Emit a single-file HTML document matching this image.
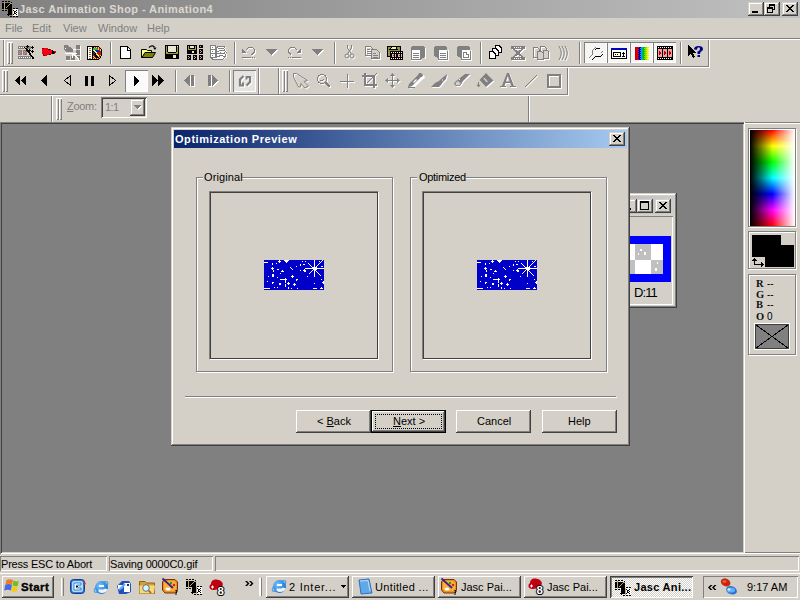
<!DOCTYPE html>
<html><head><meta charset="utf-8">
<style>
*{box-sizing:border-box}
html,body{margin:0;padding:0;width:800px;height:600px;overflow:hidden;background:#d4d0c8;font-family:"Liberation Sans",sans-serif;font-size:11px;color:#000}
.a{position:absolute}
.t{position:absolute;white-space:pre;line-height:13px}
.hl{position:absolute;height:1px}
.vl{position:absolute;width:1px}
.btn{position:absolute;background:#d4d0c8;box-shadow:inset -1px -1px #404040,inset 1px 1px #fff,inset -2px -2px #808080}
.cbtn{position:absolute;width:16px;height:14px;background:#d4d0c8;box-shadow:inset -1px -1px #404040,inset 1px 1px #d4d0c8,inset -2px -2px #808080,inset 2px 2px #fff}
.pressed{position:absolute;box-shadow:inset 1px 1px #808080,inset -1px -1px #fff;background-color:#e9e7e3}
.grip{position:absolute;width:6px}
.grip:before,.grip:after{content:"";position:absolute;top:0;bottom:0;width:3px;box-shadow:inset 1px 1px #fff,inset -1px -1px #808080}
.grip:before{left:0}.grip:after{left:3px}
.sep{position:absolute;width:2px;box-shadow:inset 1px 0 #808080,inset -1px 0 #fff}
svg{position:absolute;overflow:visible}
</style></head><body>


<!-- Title bar -->
<div class="a" style="left:0;top:0;width:800px;height:18px;background:linear-gradient(to right,#808080,#c0c0c0)"></div>
<div class="t" style="left:19px;top:3px;color:#dcd8d0;font-weight:bold;letter-spacing:0.42px">Jasc Animation Shop - Animation4</div>
<div class="cbtn" style="left:748px;top:2px"></div>
<div class="cbtn" style="left:764px;top:2px"></div>
<div class="cbtn" style="left:782px;top:2px"></div>
<svg style="left:752px;top:11px" width="6" height="2" shape-rendering="crispEdges"><rect width="6" height="2" fill="#000"/></svg>
<svg style="left:767px;top:4px" width="8" height="9" shape-rendering="crispEdges" fill="#000"><rect x="2" y="0" width="6" height="2"/><rect x="7" y="2" width="1" height="4"/><rect x="6" y="5" width="1" height="1"/><rect x="2" y="2" width="1" height="1"/><rect x="0" y="3" width="6" height="2"/><rect x="0" y="5" width="1" height="4"/><rect x="5" y="5" width="1" height="4"/><rect x="0" y="8" width="6" height="1"/></svg>
<svg style="left:786px;top:5px" width="8" height="7" shape-rendering="crispEdges" fill="#000"><rect x="0" y="0" width="2" height="1"/><rect x="6" y="0" width="2" height="1"/><rect x="1" y="1" width="2" height="1"/><rect x="5" y="1" width="2" height="1"/><rect x="2" y="2" width="4" height="1"/><rect x="3" y="3" width="2" height="1"/><rect x="2" y="4" width="4" height="1"/><rect x="1" y="5" width="2" height="1"/><rect x="5" y="5" width="2" height="1"/><rect x="0" y="6" width="2" height="1"/><rect x="6" y="6" width="2" height="1"/></svg>

<!-- JASCICON -->
<svg style="left:2px;top:1px" width="16" height="16" shape-rendering="crispEdges"><rect x="0" y="0" width="2" height="1" fill="#000"/><rect x="3" y="0" width="2" height="1" fill="#000"/><rect x="6" y="0" width="2" height="1" fill="#000"/><rect x="2" y="1" width="1" height="1" fill="#c0a868"/><rect x="9" y="1" width="1" height="1" fill="#000"/><rect x="0" y="2" width="2" height="1" fill="#000"/><rect x="2" y="2" width="1" height="1" fill="#c0a868"/><rect x="3" y="2" width="5" height="1" fill="#000"/><rect x="8" y="2" width="2" height="1" fill="#c0a868"/><rect x="0" y="3" width="2" height="1" fill="#000"/><rect x="2" y="3" width="1" height="1" fill="#c0a868"/><rect x="3" y="3" width="4" height="1" fill="#000"/><rect x="7" y="3" width="1" height="1" fill="#c0a868"/><rect x="8" y="3" width="2" height="1" fill="#000"/><rect x="0" y="4" width="2" height="1" fill="#000"/><rect x="2" y="4" width="1" height="1" fill="#c0a868"/><rect x="3" y="4" width="3" height="1" fill="#000"/><rect x="6" y="4" width="1" height="1" fill="#c0a868"/><rect x="7" y="4" width="3" height="1" fill="#000"/><rect x="0" y="5" width="2" height="1" fill="#000"/><rect x="2" y="5" width="1" height="1" fill="#c0a868"/><rect x="3" y="5" width="2" height="1" fill="#000"/><rect x="5" y="5" width="1" height="1" fill="#c0a868"/><rect x="6" y="5" width="4" height="1" fill="#000"/><rect x="0" y="6" width="2" height="1" fill="#000"/><rect x="2" y="6" width="1" height="1" fill="#c0a868"/><rect x="3" y="6" width="1" height="1" fill="#000"/><rect x="4" y="6" width="1" height="1" fill="#c0a868"/><rect x="5" y="6" width="5" height="1" fill="#000"/><rect x="0" y="7" width="2" height="1" fill="#000"/><rect x="2" y="7" width="1" height="1" fill="#c0a868"/><rect x="3" y="7" width="7" height="1" fill="#000"/><rect x="11" y="7" width="2" height="1" fill="#000"/><rect x="14" y="7" width="2" height="1" fill="#000"/><rect x="2" y="8" width="1" height="1" fill="#c0a868"/><rect x="6" y="8" width="4" height="1" fill="#000"/><rect x="10" y="8" width="1" height="1" fill="#c0a868"/><rect x="11" y="8" width="5" height="1" fill="#fff"/><rect x="0" y="9" width="2" height="1" fill="#000"/><rect x="3" y="9" width="2" height="1" fill="#000"/><rect x="6" y="9" width="4" height="1" fill="#000"/><rect x="10" y="9" width="1" height="1" fill="#c0a868"/><rect x="11" y="9" width="1" height="1" fill="#000"/><rect x="12" y="9" width="2" height="1" fill="#fff"/><rect x="14" y="9" width="1" height="1" fill="#000"/><rect x="15" y="9" width="1" height="1" fill="#fff"/><rect x="6" y="10" width="4" height="1" fill="#000"/><rect x="10" y="10" width="1" height="1" fill="#c0a868"/><rect x="11" y="10" width="1" height="1" fill="#fff"/><rect x="12" y="10" width="2" height="1" fill="#000"/><rect x="14" y="10" width="2" height="1" fill="#fff"/><rect x="6" y="11" width="4" height="1" fill="#000"/><rect x="10" y="11" width="1" height="1" fill="#c0a868"/><rect x="11" y="11" width="1" height="1" fill="#fff"/><rect x="12" y="11" width="1" height="1" fill="#000"/><rect x="13" y="11" width="1" height="1" fill="#fff"/><rect x="14" y="11" width="1" height="1" fill="#000"/><rect x="15" y="11" width="1" height="1" fill="#fff"/><rect x="6" y="12" width="4" height="1" fill="#000"/><rect x="10" y="12" width="1" height="1" fill="#c0a868"/><rect x="11" y="12" width="1" height="1" fill="#fff"/><rect x="12" y="12" width="2" height="1" fill="#000"/><rect x="14" y="12" width="2" height="1" fill="#fff"/><rect x="5" y="13" width="5" height="1" fill="#000"/><rect x="10" y="13" width="1" height="1" fill="#c0a868"/><rect x="11" y="13" width="1" height="1" fill="#000"/><rect x="12" y="13" width="2" height="1" fill="#fff"/><rect x="14" y="13" width="1" height="1" fill="#000"/><rect x="15" y="13" width="1" height="1" fill="#fff"/><rect x="6" y="14" width="1" height="1" fill="#000"/><rect x="10" y="14" width="1" height="1" fill="#c0a868"/><rect x="11" y="14" width="5" height="1" fill="#fff"/><rect x="8" y="15" width="2" height="1" fill="#000"/><rect x="11" y="15" width="2" height="1" fill="#000"/><rect x="14" y="15" width="2" height="1" fill="#000"/></svg>
<!-- Menu -->
<div class="t" style="left:5px;top:22px;color:#808080">File</div>
<div class="t" style="left:32px;top:22px;color:#808080">Edit</div>
<div class="t" style="left:63px;top:22px;color:#808080">View</div>
<div class="t" style="left:98px;top:22px;color:#808080">Window</div>
<div class="t" style="left:147px;top:22px;color:#808080">Help</div>

<!-- rebar lines -->
<div class="hl" style="left:0;top:38px;width:800px;background:#808080"></div>
<div class="hl" style="left:0;top:39px;width:800px;background:#fff"></div>

<!-- Toolbars -->
<div class="vl" style="left:3px;top:40px;height:26px;background:#808080"></div>
<div class="vl" style="left:4px;top:40px;height:26px;background:#fff"></div>
<div class="vl" style="left:708px;top:40px;height:26px;background:#808080"></div>
<div class="vl" style="left:709px;top:40px;height:27px;background:#fff"></div>
<div class="hl" style="left:0px;top:66px;width:709px;background:#808080"></div>
<div class="hl" style="left:0px;top:67px;width:710px;background:#fff"></div>
<div class="hl" style="left:0px;top:94px;width:568px;background:#808080"></div>
<div class="hl" style="left:0px;top:95px;width:569px;background:#fff"></div>
<div class="vl" style="left:258px;top:68px;height:26px;background:#808080"></div>
<div class="vl" style="left:259px;top:68px;height:26px;background:#fff"></div>
<div class="vl" style="left:278px;top:68px;height:26px;background:#808080"></div>
<div class="vl" style="left:279px;top:68px;height:26px;background:#fff"></div>
<div class="vl" style="left:567px;top:68px;height:26px;background:#808080"></div>
<div class="vl" style="left:568px;top:68px;height:27px;background:#fff"></div>
<div class="vl" style="left:51px;top:96px;height:26px;background:#808080"></div>
<div class="vl" style="left:52px;top:96px;height:26px;background:#fff"></div>
<div class="vl" style="left:528px;top:96px;height:26px;background:#808080"></div>
<div class="vl" style="left:529px;top:96px;height:26px;background:#fff"></div>
<div class="grip" style="left:7px;top:42px;height:22px"></div>
<div class="grip" style="left:2px;top:70px;height:22px"></div>
<div class="grip" style="left:282px;top:70px;height:22px"></div>
<div class="grip" style="left:56px;top:98px;height:22px"></div>
<svg style="left:18px;top:45px" width="16" height="14" shape-rendering="crispEdges"><rect x="9" y="0" width="1" height="1" fill="#000"/><rect x="0" y="1" width="8" height="1" fill="#808080"/><rect x="8" y="1" width="3" height="1" fill="#000"/><rect x="11" y="1" width="2" height="1" fill="#808080"/><rect x="14" y="1" width="1" height="1" fill="#000"/><rect x="0" y="2" width="1" height="1" fill="#808080"/><rect x="1" y="2" width="1" height="1" fill="#fff"/><rect x="2" y="2" width="1" height="1" fill="#808080"/><rect x="3" y="2" width="1" height="1" fill="#fff"/><rect x="4" y="2" width="1" height="1" fill="#808080"/><rect x="5" y="2" width="1" height="1" fill="#fff"/><rect x="6" y="2" width="1" height="1" fill="#000"/><rect x="7" y="2" width="1" height="1" fill="#e0d040"/><rect x="8" y="2" width="1" height="1" fill="#808080"/><rect x="9" y="2" width="1" height="1" fill="#000"/><rect x="10" y="2" width="3" height="1" fill="#808080"/><rect x="13" y="2" width="3" height="1" fill="#000"/><rect x="0" y="3" width="6" height="1" fill="#808080"/><rect x="6" y="3" width="1" height="1" fill="#e0d040"/><rect x="7" y="3" width="2" height="1" fill="#000"/><rect x="9" y="3" width="4" height="1" fill="#808080"/><rect x="14" y="3" width="1" height="1" fill="#000"/><rect x="6" y="4" width="1" height="1" fill="#e0d040"/><rect x="8" y="4" width="2" height="1" fill="#000"/><rect x="11" y="4" width="1" height="1" fill="#000"/><rect x="0" y="5" width="4" height="1" fill="#808080"/><rect x="5" y="5" width="3" height="1" fill="#808080"/><rect x="8" y="5" width="5" height="1" fill="#000"/><rect x="14" y="5" width="1" height="1" fill="#000"/><rect x="0" y="6" width="1" height="1" fill="#808080"/><rect x="1" y="6" width="1" height="1" fill="#f08080"/><rect x="2" y="6" width="2" height="1" fill="#808080"/><rect x="5" y="6" width="1" height="1" fill="#808080"/><rect x="6" y="6" width="1" height="1" fill="#f08080"/><rect x="7" y="6" width="2" height="1" fill="#808080"/><rect x="9" y="6" width="3" height="1" fill="#000"/><rect x="13" y="6" width="3" height="1" fill="#000"/><rect x="0" y="7" width="2" height="1" fill="#808080"/><rect x="2" y="7" width="1" height="1" fill="#f08080"/><rect x="3" y="7" width="1" height="1" fill="#808080"/><rect x="5" y="7" width="2" height="1" fill="#808080"/><rect x="7" y="7" width="1" height="1" fill="#f08080"/><rect x="8" y="7" width="1" height="1" fill="#808080"/><rect x="10" y="7" width="2" height="1" fill="#000"/><rect x="14" y="7" width="1" height="1" fill="#000"/><rect x="0" y="8" width="1" height="1" fill="#808080"/><rect x="1" y="8" width="1" height="1" fill="#f08080"/><rect x="2" y="8" width="2" height="1" fill="#808080"/><rect x="5" y="8" width="1" height="1" fill="#808080"/><rect x="6" y="8" width="1" height="1" fill="#f08080"/><rect x="7" y="8" width="2" height="1" fill="#808080"/><rect x="11" y="8" width="2" height="1" fill="#000"/><rect x="0" y="9" width="4" height="1" fill="#808080"/><rect x="5" y="9" width="4" height="1" fill="#808080"/><rect x="11" y="9" width="2" height="1" fill="#000"/><rect x="12" y="10" width="2" height="1" fill="#000"/><rect x="0" y="11" width="13" height="1" fill="#808080"/><rect x="13" y="11" width="2" height="1" fill="#000"/><rect x="0" y="12" width="1" height="1" fill="#808080"/><rect x="1" y="12" width="1" height="1" fill="#fff"/><rect x="2" y="12" width="1" height="1" fill="#808080"/><rect x="3" y="12" width="1" height="1" fill="#fff"/><rect x="4" y="12" width="1" height="1" fill="#808080"/><rect x="5" y="12" width="1" height="1" fill="#fff"/><rect x="6" y="12" width="1" height="1" fill="#808080"/><rect x="7" y="12" width="1" height="1" fill="#fff"/><rect x="8" y="12" width="1" height="1" fill="#808080"/><rect x="9" y="12" width="1" height="1" fill="#fff"/><rect x="10" y="12" width="1" height="1" fill="#808080"/><rect x="11" y="12" width="1" height="1" fill="#fff"/><rect x="12" y="12" width="1" height="1" fill="#808080"/><rect x="14" y="12" width="2" height="1" fill="#000"/><rect x="0" y="13" width="13" height="1" fill="#808080"/><rect x="14" y="13" width="2" height="1" fill="#000"/></svg>
<svg style="left:42px;top:48px" width="14" height="8" shape-rendering="crispEdges"><rect x="0" y="0" width="2" height="1" fill="#800000"/><rect x="2" y="0" width="4" height="1" fill="#f00010"/><rect x="0" y="1" width="6" height="1" fill="#f00010"/><rect x="6" y="1" width="1" height="1" fill="#800000"/><rect x="7" y="1" width="1" height="1" fill="#000"/><rect x="8" y="1" width="1" height="1" fill="#f00010"/><rect x="0" y="2" width="10" height="1" fill="#f00010"/><rect x="10" y="2" width="1" height="1" fill="#000"/><rect x="0" y="3" width="10" height="1" fill="#f00010"/><rect x="10" y="3" width="2" height="1" fill="#000"/><rect x="12" y="3" width="2" height="1" fill="#f00010"/><rect x="0" y="4" width="10" height="1" fill="#f00010"/><rect x="10" y="4" width="3" height="1" fill="#000"/><rect x="13" y="4" width="1" height="1" fill="#f00010"/><rect x="0" y="5" width="10" height="1" fill="#f00010"/><rect x="10" y="5" width="2" height="1" fill="#000"/><rect x="12" y="5" width="1" height="1" fill="#f00010"/><rect x="1" y="6" width="1" height="1" fill="#800000"/><rect x="2" y="6" width="5" height="1" fill="#f00010"/><rect x="7" y="6" width="1" height="1" fill="#000"/><rect x="8" y="6" width="1" height="1" fill="#800000"/><rect x="1" y="7" width="2" height="1" fill="#800000"/><rect x="3" y="7" width="2" height="1" fill="#f00010"/></svg>
<svg style="left:64px;top:45px" width="16" height="16" viewBox="0 0 16 16" shape-rendering="crispEdges"><g fill="#808080"><path d="M0 0H3L5 2H6L9 5V7H2L0 5Z"/><rect x="12" y="0" width="4" height="4"/><rect x="12" y="5" width="4" height="5"/><rect x="2" y="11" width="4" height="4"/><rect x="7" y="11" width="4" height="4"/><path d="M12 11L16 11V15H15Z"/></g>
<g fill="#fff"><rect x="1" y="3" width="1" height="1"/><rect x="1" y="8" width="12" height="1"/><rect x="8" y="8" width="1" height="5"/><rect x="16" y="1" width="1" height="14"/><rect x="9" y="4" width="3" height="1"/><rect x="2" y="15" width="14" height="1"/></g><path d="M9.5 9L15 14.5" stroke="#fff" stroke-width="1.2"/></svg>
<svg style="left:87px;top:46px" width="15" height="14" shape-rendering="crispEdges"><rect x="0" y="0" width="12" height="1" fill="#000"/><rect x="0" y="1" width="1" height="1" fill="#000"/><rect x="1" y="1" width="4" height="1" fill="#fffff0"/><rect x="5" y="1" width="2" height="1" fill="#000"/><rect x="7" y="1" width="1" height="1" fill="#f8d040"/><rect x="8" y="1" width="1" height="1" fill="#c02000"/><rect x="9" y="1" width="1" height="1" fill="#f8d040"/><rect x="10" y="1" width="1" height="1" fill="#c02000"/><rect x="11" y="1" width="1" height="1" fill="#f8d040"/><rect x="12" y="1" width="1" height="1" fill="#000"/><rect x="0" y="2" width="1" height="1" fill="#000"/><rect x="1" y="2" width="1" height="1" fill="#fffff0"/><rect x="2" y="2" width="2" height="1" fill="#807040"/><rect x="4" y="2" width="1" height="1" fill="#fffff0"/><rect x="5" y="2" width="1" height="1" fill="#000"/><rect x="6" y="2" width="4" height="1" fill="#40c020"/><rect x="10" y="2" width="1" height="1" fill="#c02000"/><rect x="11" y="2" width="1" height="1" fill="#f8d040"/><rect x="12" y="2" width="1" height="1" fill="#c02000"/><rect x="13" y="2" width="1" height="1" fill="#000"/><rect x="0" y="3" width="1" height="1" fill="#000"/><rect x="1" y="3" width="4" height="1" fill="#fffff0"/><rect x="5" y="3" width="1" height="1" fill="#000"/><rect x="6" y="3" width="5" height="1" fill="#40c020"/><rect x="11" y="3" width="1" height="1" fill="#f8d040"/><rect x="12" y="3" width="1" height="1" fill="#c02000"/><rect x="13" y="3" width="1" height="1" fill="#f8d040"/><rect x="14" y="3" width="1" height="1" fill="#000"/><rect x="0" y="4" width="1" height="1" fill="#000"/><rect x="1" y="4" width="1" height="1" fill="#fffff0"/><rect x="2" y="4" width="2" height="1" fill="#807040"/><rect x="4" y="4" width="1" height="1" fill="#fffff0"/><rect x="5" y="4" width="1" height="1" fill="#000"/><rect x="6" y="4" width="1" height="1" fill="#f8d040"/><rect x="7" y="4" width="1" height="1" fill="#fffff0"/><rect x="8" y="4" width="4" height="1" fill="#1020c0"/><rect x="12" y="4" width="1" height="1" fill="#c02000"/><rect x="13" y="4" width="1" height="1" fill="#f8d040"/><rect x="14" y="4" width="1" height="1" fill="#000"/><rect x="0" y="5" width="1" height="1" fill="#000"/><rect x="1" y="5" width="4" height="1" fill="#fffff0"/><rect x="5" y="5" width="2" height="1" fill="#000"/><rect x="7" y="5" width="1" height="1" fill="#f8d040"/><rect x="8" y="5" width="1" height="1" fill="#fffff0"/><rect x="9" y="5" width="4" height="1" fill="#1020c0"/><rect x="13" y="5" width="1" height="1" fill="#c02000"/><rect x="14" y="5" width="1" height="1" fill="#000"/><rect x="0" y="6" width="1" height="1" fill="#000"/><rect x="1" y="6" width="1" height="1" fill="#fffff0"/><rect x="2" y="6" width="2" height="1" fill="#807040"/><rect x="4" y="6" width="1" height="1" fill="#fffff0"/><rect x="5" y="6" width="1" height="1" fill="#000"/><rect x="6" y="6" width="1" height="1" fill="#402080"/><rect x="7" y="6" width="1" height="1" fill="#000"/><rect x="8" y="6" width="1" height="1" fill="#f8d040"/><rect x="9" y="6" width="1" height="1" fill="#fffff0"/><rect x="10" y="6" width="4" height="1" fill="#c02000"/><rect x="14" y="6" width="1" height="1" fill="#000"/><rect x="0" y="7" width="1" height="1" fill="#000"/><rect x="1" y="7" width="4" height="1" fill="#fffff0"/><rect x="5" y="7" width="1" height="1" fill="#000"/><rect x="6" y="7" width="2" height="1" fill="#402080"/><rect x="8" y="7" width="1" height="1" fill="#000"/><rect x="9" y="7" width="1" height="1" fill="#f8d040"/><rect x="10" y="7" width="4" height="1" fill="#c02000"/><rect x="14" y="7" width="1" height="1" fill="#000"/><rect x="0" y="8" width="1" height="1" fill="#000"/><rect x="1" y="8" width="1" height="1" fill="#fffff0"/><rect x="2" y="8" width="2" height="1" fill="#807040"/><rect x="4" y="8" width="1" height="1" fill="#fffff0"/><rect x="5" y="8" width="1" height="1" fill="#000"/><rect x="6" y="8" width="1" height="1" fill="#402080"/><rect x="7" y="8" width="2" height="1" fill="#000"/><rect x="9" y="8" width="1" height="1" fill="#f8d040"/><rect x="10" y="8" width="1" height="1" fill="#fffff0"/><rect x="11" y="8" width="3" height="1" fill="#c02000"/><rect x="14" y="8" width="1" height="1" fill="#000"/><rect x="0" y="9" width="1" height="1" fill="#000"/><rect x="1" y="9" width="4" height="1" fill="#fffff0"/><rect x="5" y="9" width="1" height="1" fill="#000"/><rect x="6" y="9" width="1" height="1" fill="#c02000"/><rect x="7" y="9" width="1" height="1" fill="#402080"/><rect x="8" y="9" width="2" height="1" fill="#000"/><rect x="10" y="9" width="1" height="1" fill="#f8d040"/><rect x="11" y="9" width="1" height="1" fill="#fffff0"/><rect x="12" y="9" width="1" height="1" fill="#c02000"/><rect x="13" y="9" width="1" height="1" fill="#f8d040"/><rect x="14" y="9" width="1" height="1" fill="#000"/><rect x="0" y="10" width="1" height="1" fill="#000"/><rect x="1" y="10" width="1" height="1" fill="#fffff0"/><rect x="2" y="10" width="2" height="1" fill="#807040"/><rect x="4" y="10" width="1" height="1" fill="#fffff0"/><rect x="5" y="10" width="1" height="1" fill="#000"/><rect x="6" y="10" width="1" height="1" fill="#f8d040"/><rect x="7" y="10" width="1" height="1" fill="#c02000"/><rect x="8" y="10" width="3" height="1" fill="#000"/><rect x="11" y="10" width="1" height="1" fill="#f8d040"/><rect x="12" y="10" width="1" height="1" fill="#c02000"/><rect x="13" y="10" width="1" height="1" fill="#000"/><rect x="0" y="11" width="1" height="1" fill="#000"/><rect x="1" y="11" width="4" height="1" fill="#fffff0"/><rect x="5" y="11" width="1" height="1" fill="#000"/><rect x="6" y="11" width="1" height="1" fill="#c02000"/><rect x="7" y="11" width="1" height="1" fill="#f8d040"/><rect x="8" y="11" width="1" height="1" fill="#c02000"/><rect x="9" y="11" width="3" height="1" fill="#000"/><rect x="12" y="11" width="1" height="1" fill="#f8d040"/><rect x="13" y="11" width="1" height="1" fill="#000"/><rect x="0" y="12" width="1" height="1" fill="#000"/><rect x="1" y="12" width="1" height="1" fill="#fffff0"/><rect x="2" y="12" width="2" height="1" fill="#807040"/><rect x="4" y="12" width="1" height="1" fill="#fffff0"/><rect x="5" y="12" width="1" height="1" fill="#000"/><rect x="6" y="12" width="1" height="1" fill="#f8d040"/><rect x="7" y="12" width="1" height="1" fill="#c02000"/><rect x="8" y="12" width="1" height="1" fill="#f8d040"/><rect x="9" y="12" width="1" height="1" fill="#c02000"/><rect x="10" y="12" width="1" height="1" fill="#f8d040"/><rect x="11" y="12" width="1" height="1" fill="#c02000"/><rect x="12" y="12" width="1" height="1" fill="#000"/><rect x="0" y="13" width="12" height="1" fill="#000"/></svg>
<div class="vl" style="left:110px;top:42px;height:22px;background:#808080"></div>
<div class="vl" style="left:111px;top:42px;height:22px;background:#fff"></div>
<svg style="left:118px;top:45px" width="16" height="16" viewBox="0 0 16 16" shape-rendering="crispEdges"><path d="M2.5 1.5H9.5L12.5 4.5V13.5H2.5Z" fill="#fff" stroke="#000"/><path d="M9 2V5H12" fill="none" stroke="#000"/></svg>
<svg style="left:141px;top:45px" width="16" height="16" viewBox="0 0 16 16" shape-rendering="auto"><path d="M0.5 4.5H5.5L6.5 5.5H10.5V8.5H4L1 12.5H0.5Z" fill="#ffff80" stroke="#000"/><path d="M1 12.5L4 7.5H14.5L11.5 12.5Z" fill="#808000" stroke="#000"/><path d="M8 2.5Q11 -0.5 13.5 2" fill="none" stroke="#000" stroke-width="1.2"/><path d="M12 2.5H15.5L14 5Z" fill="#000"/></svg>
<svg style="left:164px;top:45px" width="15" height="14" shape-rendering="crispEdges"><rect x="1" y="0" width="14" height="1" fill="#000"/><rect x="1" y="1" width="1" height="1" fill="#000"/><rect x="2" y="1" width="1" height="1" fill="#a0a030"/><rect x="3" y="1" width="1" height="1" fill="#000"/><rect x="4" y="1" width="8" height="1" fill="#e8e8d8"/><rect x="12" y="1" width="1" height="1" fill="#000"/><rect x="13" y="1" width="1" height="1" fill="#e8e8d8"/><rect x="14" y="1" width="1" height="1" fill="#000"/><rect x="1" y="2" width="1" height="1" fill="#000"/><rect x="2" y="2" width="1" height="1" fill="#a0a030"/><rect x="3" y="2" width="1" height="1" fill="#000"/><rect x="4" y="2" width="8" height="1" fill="#e8e8d8"/><rect x="12" y="2" width="1" height="1" fill="#000"/><rect x="13" y="2" width="1" height="1" fill="#a0a030"/><rect x="14" y="2" width="1" height="1" fill="#000"/><rect x="1" y="3" width="1" height="1" fill="#000"/><rect x="2" y="3" width="1" height="1" fill="#a0a030"/><rect x="3" y="3" width="1" height="1" fill="#000"/><rect x="4" y="3" width="8" height="1" fill="#e8e8d8"/><rect x="12" y="3" width="1" height="1" fill="#000"/><rect x="13" y="3" width="1" height="1" fill="#a0a030"/><rect x="14" y="3" width="1" height="1" fill="#000"/><rect x="1" y="4" width="1" height="1" fill="#000"/><rect x="2" y="4" width="1" height="1" fill="#a0a030"/><rect x="3" y="4" width="1" height="1" fill="#000"/><rect x="4" y="4" width="8" height="1" fill="#e8e8d8"/><rect x="12" y="4" width="1" height="1" fill="#000"/><rect x="13" y="4" width="1" height="1" fill="#a0a030"/><rect x="14" y="4" width="1" height="1" fill="#000"/><rect x="1" y="5" width="1" height="1" fill="#000"/><rect x="2" y="5" width="1" height="1" fill="#a0a030"/><rect x="3" y="5" width="1" height="1" fill="#000"/><rect x="4" y="5" width="8" height="1" fill="#e8e8d8"/><rect x="12" y="5" width="1" height="1" fill="#000"/><rect x="13" y="5" width="1" height="1" fill="#a0a030"/><rect x="14" y="5" width="1" height="1" fill="#000"/><rect x="1" y="6" width="1" height="1" fill="#000"/><rect x="2" y="6" width="1" height="1" fill="#a0a030"/><rect x="3" y="6" width="1" height="1" fill="#000"/><rect x="4" y="6" width="8" height="1" fill="#e8e8d8"/><rect x="12" y="6" width="1" height="1" fill="#000"/><rect x="13" y="6" width="1" height="1" fill="#a0a030"/><rect x="14" y="6" width="1" height="1" fill="#000"/><rect x="1" y="7" width="1" height="1" fill="#000"/><rect x="2" y="7" width="2" height="1" fill="#a0a030"/><rect x="4" y="7" width="8" height="1" fill="#000"/><rect x="12" y="7" width="2" height="1" fill="#a0a030"/><rect x="14" y="7" width="1" height="1" fill="#000"/><rect x="1" y="8" width="1" height="1" fill="#000"/><rect x="2" y="8" width="12" height="1" fill="#a0a030"/><rect x="14" y="8" width="1" height="1" fill="#000"/><rect x="1" y="9" width="14" height="1" fill="#000"/><rect x="1" y="10" width="8" height="1" fill="#000"/><rect x="9" y="10" width="3" height="1" fill="#e8e8d8"/><rect x="12" y="10" width="3" height="1" fill="#000"/><rect x="1" y="11" width="8" height="1" fill="#000"/><rect x="9" y="11" width="3" height="1" fill="#e8e8d8"/><rect x="12" y="11" width="3" height="1" fill="#000"/><rect x="1" y="12" width="8" height="1" fill="#000"/><rect x="9" y="12" width="3" height="1" fill="#e8e8d8"/><rect x="12" y="12" width="3" height="1" fill="#000"/><rect x="1" y="13" width="14" height="1" fill="#000"/></svg>
<svg style="left:187px;top:45px" width="16" height="15" shape-rendering="crispEdges"><rect x="0" y="0" width="10" height="1" fill="#000"/><rect x="12" y="0" width="4" height="1" fill="#000"/><rect x="0" y="1" width="1" height="1" fill="#000"/><rect x="1" y="1" width="1" height="1" fill="#a0a030"/><rect x="2" y="1" width="1" height="1" fill="#000"/><rect x="3" y="1" width="4" height="1" fill="#e8e8d8"/><rect x="7" y="1" width="1" height="1" fill="#000"/><rect x="8" y="1" width="1" height="1" fill="#a0a030"/><rect x="9" y="1" width="1" height="1" fill="#000"/><rect x="12" y="1" width="1" height="1" fill="#000"/><rect x="13" y="1" width="1" height="1" fill="#f0a0a0"/><rect x="14" y="1" width="2" height="1" fill="#000"/><rect x="0" y="2" width="1" height="1" fill="#000"/><rect x="1" y="2" width="1" height="1" fill="#a0a030"/><rect x="2" y="2" width="1" height="1" fill="#000"/><rect x="3" y="2" width="4" height="1" fill="#e8e8d8"/><rect x="7" y="2" width="1" height="1" fill="#000"/><rect x="8" y="2" width="1" height="1" fill="#a0a030"/><rect x="9" y="2" width="1" height="1" fill="#000"/><rect x="12" y="2" width="4" height="1" fill="#000"/><rect x="0" y="3" width="1" height="1" fill="#000"/><rect x="1" y="3" width="1" height="1" fill="#a0a030"/><rect x="2" y="3" width="6" height="1" fill="#000"/><rect x="8" y="3" width="1" height="1" fill="#a0a030"/><rect x="9" y="3" width="1" height="1" fill="#000"/><rect x="0" y="4" width="1" height="1" fill="#000"/><rect x="1" y="4" width="8" height="1" fill="#a0a030"/><rect x="9" y="4" width="1" height="1" fill="#000"/><rect x="12" y="4" width="4" height="1" fill="#000"/><rect x="0" y="5" width="10" height="1" fill="#000"/><rect x="12" y="5" width="1" height="1" fill="#000"/><rect x="13" y="5" width="1" height="1" fill="#f0a0a0"/><rect x="14" y="5" width="2" height="1" fill="#000"/><rect x="0" y="6" width="5" height="1" fill="#000"/><rect x="5" y="6" width="2" height="1" fill="#e8e8d8"/><rect x="7" y="6" width="3" height="1" fill="#000"/><rect x="12" y="6" width="2" height="1" fill="#000"/><rect x="14" y="6" width="1" height="1" fill="#f0a0a0"/><rect x="15" y="6" width="1" height="1" fill="#000"/><rect x="0" y="7" width="5" height="1" fill="#000"/><rect x="5" y="7" width="2" height="1" fill="#e8e8d8"/><rect x="7" y="7" width="3" height="1" fill="#000"/><rect x="12" y="7" width="1" height="1" fill="#000"/><rect x="13" y="7" width="1" height="1" fill="#f0a0a0"/><rect x="14" y="7" width="2" height="1" fill="#000"/><rect x="0" y="8" width="10" height="1" fill="#000"/><rect x="12" y="8" width="4" height="1" fill="#000"/><rect x="0" y="10" width="4" height="1" fill="#000"/><rect x="6" y="10" width="4" height="1" fill="#000"/><rect x="12" y="10" width="4" height="1" fill="#000"/><rect x="0" y="11" width="1" height="1" fill="#000"/><rect x="1" y="11" width="1" height="1" fill="#f0a0a0"/><rect x="2" y="11" width="2" height="1" fill="#000"/><rect x="6" y="11" width="1" height="1" fill="#000"/><rect x="7" y="11" width="1" height="1" fill="#f0a0a0"/><rect x="8" y="11" width="2" height="1" fill="#000"/><rect x="12" y="11" width="1" height="1" fill="#000"/><rect x="13" y="11" width="1" height="1" fill="#f0a0a0"/><rect x="14" y="11" width="2" height="1" fill="#000"/><rect x="0" y="12" width="2" height="1" fill="#000"/><rect x="2" y="12" width="1" height="1" fill="#f0a0a0"/><rect x="3" y="12" width="1" height="1" fill="#000"/><rect x="6" y="12" width="2" height="1" fill="#000"/><rect x="8" y="12" width="1" height="1" fill="#f0a0a0"/><rect x="9" y="12" width="1" height="1" fill="#000"/><rect x="12" y="12" width="2" height="1" fill="#000"/><rect x="14" y="12" width="1" height="1" fill="#f0a0a0"/><rect x="15" y="12" width="1" height="1" fill="#000"/><rect x="0" y="13" width="1" height="1" fill="#000"/><rect x="1" y="13" width="1" height="1" fill="#f0a0a0"/><rect x="2" y="13" width="2" height="1" fill="#000"/><rect x="6" y="13" width="1" height="1" fill="#000"/><rect x="7" y="13" width="1" height="1" fill="#f0a0a0"/><rect x="8" y="13" width="2" height="1" fill="#000"/><rect x="12" y="13" width="1" height="1" fill="#000"/><rect x="13" y="13" width="1" height="1" fill="#f0a0a0"/><rect x="14" y="13" width="2" height="1" fill="#000"/><rect x="0" y="14" width="4" height="1" fill="#000"/><rect x="6" y="14" width="4" height="1" fill="#000"/><rect x="12" y="14" width="4" height="1" fill="#000"/></svg>
<svg style="left:210px;top:45px" width="17" height="15" shape-rendering="crispEdges"><rect x="0" y="0" width="6" height="1" fill="#808080"/><rect x="0" y="1" width="1" height="1" fill="#808080"/><rect x="1" y="1" width="4" height="1" fill="#fff"/><rect x="5" y="1" width="1" height="1" fill="#808080"/><rect x="7" y="1" width="8" height="1" fill="#808080"/><rect x="0" y="2" width="1" height="1" fill="#808080"/><rect x="1" y="2" width="1" height="1" fill="#fff"/><rect x="2" y="2" width="1" height="1" fill="#808080"/><rect x="3" y="2" width="2" height="1" fill="#fff"/><rect x="5" y="2" width="3" height="1" fill="#808080"/><rect x="8" y="2" width="6" height="1" fill="#fff"/><rect x="14" y="2" width="1" height="1" fill="#808080"/><rect x="15" y="2" width="1" height="1" fill="#fff"/><rect x="0" y="3" width="1" height="1" fill="#808080"/><rect x="1" y="3" width="4" height="1" fill="#fff"/><rect x="5" y="3" width="2" height="1" fill="#808080"/><rect x="7" y="3" width="1" height="1" fill="#fff"/><rect x="8" y="3" width="6" height="1" fill="#808080"/><rect x="14" y="3" width="1" height="1" fill="#fff"/><rect x="0" y="4" width="7" height="1" fill="#808080"/><rect x="7" y="4" width="7" height="1" fill="#fff"/><rect x="14" y="4" width="1" height="1" fill="#808080"/><rect x="15" y="4" width="1" height="1" fill="#fff"/><rect x="0" y="5" width="1" height="1" fill="#808080"/><rect x="1" y="5" width="4" height="1" fill="#fff"/><rect x="5" y="5" width="2" height="1" fill="#808080"/><rect x="7" y="5" width="2" height="1" fill="#fff"/><rect x="9" y="5" width="6" height="1" fill="#808080"/><rect x="15" y="5" width="1" height="1" fill="#fff"/><rect x="0" y="6" width="1" height="1" fill="#808080"/><rect x="1" y="6" width="1" height="1" fill="#fff"/><rect x="2" y="6" width="1" height="1" fill="#808080"/><rect x="3" y="6" width="2" height="1" fill="#fff"/><rect x="5" y="6" width="4" height="1" fill="#808080"/><rect x="9" y="6" width="6" height="1" fill="#fff"/><rect x="15" y="6" width="1" height="1" fill="#808080"/><rect x="16" y="6" width="1" height="1" fill="#fff"/><rect x="0" y="7" width="1" height="1" fill="#808080"/><rect x="1" y="7" width="4" height="1" fill="#fff"/><rect x="5" y="7" width="2" height="1" fill="#808080"/><rect x="7" y="7" width="3" height="1" fill="#fff"/><rect x="10" y="7" width="1" height="1" fill="#808080"/><rect x="11" y="7" width="3" height="1" fill="#fff"/><rect x="14" y="7" width="1" height="1" fill="#808080"/><rect x="15" y="7" width="1" height="1" fill="#fff"/><rect x="16" y="7" width="1" height="1" fill="#808080"/><rect x="0" y="8" width="15" height="1" fill="#808080"/><rect x="15" y="8" width="1" height="1" fill="#fff"/><rect x="0" y="9" width="1" height="1" fill="#808080"/><rect x="1" y="9" width="4" height="1" fill="#fff"/><rect x="5" y="9" width="2" height="1" fill="#808080"/><rect x="7" y="9" width="8" height="1" fill="#fff"/><rect x="15" y="9" width="1" height="1" fill="#808080"/><rect x="16" y="9" width="1" height="1" fill="#fff"/><rect x="0" y="10" width="1" height="1" fill="#808080"/><rect x="1" y="10" width="1" height="1" fill="#fff"/><rect x="2" y="10" width="1" height="1" fill="#808080"/><rect x="3" y="10" width="2" height="1" fill="#fff"/><rect x="5" y="10" width="2" height="1" fill="#808080"/><rect x="7" y="10" width="2" height="1" fill="#fff"/><rect x="9" y="10" width="4" height="1" fill="#808080"/><rect x="13" y="10" width="2" height="1" fill="#fff"/><rect x="15" y="10" width="1" height="1" fill="#808080"/><rect x="16" y="10" width="1" height="1" fill="#fff"/><rect x="0" y="11" width="1" height="1" fill="#808080"/><rect x="1" y="11" width="4" height="1" fill="#fff"/><rect x="5" y="11" width="5" height="1" fill="#808080"/><rect x="10" y="11" width="3" height="1" fill="#fff"/><rect x="13" y="11" width="3" height="1" fill="#808080"/><rect x="16" y="11" width="1" height="1" fill="#fff"/><rect x="0" y="12" width="7" height="1" fill="#808080"/><rect x="7" y="12" width="7" height="1" fill="#fff"/><rect x="14" y="12" width="1" height="1" fill="#808080"/><rect x="15" y="12" width="2" height="1" fill="#fff"/><rect x="1" y="13" width="2" height="1" fill="#808080"/><rect x="3" y="13" width="10" height="1" fill="#fff"/><rect x="13" y="13" width="1" height="1" fill="#808080"/><rect x="14" y="13" width="1" height="1" fill="#fff"/><rect x="2" y="14" width="11" height="1" fill="#808080"/></svg>
<div class="vl" style="left:234px;top:42px;height:22px;background:#808080"></div>
<div class="vl" style="left:235px;top:42px;height:22px;background:#fff"></div>
<svg style="left:241px;top:45px" width="16" height="16" viewBox="0 0 16 16" shape-rendering="crispEdges"><g transform="translate(1,1)" fill="#fff" stroke="#fff"><path d="M5.5 5.5Q6 2.5 9.5 2.5Q13.5 2.5 13.5 6Q13.5 8.5 10.5 9.5" fill="none"/><path d="M1 4L6 8H1Z" stroke="none"/><path d="M1 12.5H10M11 12.5H12M13 12.5H14" fill="none"/></g><g fill="#808080" stroke="#808080"><path d="M5.5 5.5Q6 2.5 9.5 2.5Q13.5 2.5 13.5 6Q13.5 8.5 10.5 9.5" fill="none"/><path d="M1 4L6 8H1Z" stroke="none"/><path d="M1 12.5H10M11 12.5H12M13 12.5H14" fill="none"/></g></svg>
<svg style="left:265px;top:49px" width="12" height="7" viewBox="0 0 12 7" shape-rendering="crispEdges"><g transform="translate(1,1)" fill="#fff" stroke="#fff"><path d="M0 0H12L6 6Z" stroke="none"/></g><g fill="#808080" stroke="#808080"><path d="M0 0H12L6 6Z" stroke="none"/></g></svg>
<svg style="left:287px;top:45px" width="16" height="16" viewBox="0 0 16 16" shape-rendering="crispEdges"><g transform="translate(1,1)" fill="#fff" stroke="#fff"><path d="M9.5 5.5Q9 2.5 5.5 2.5Q1.5 2.5 1.5 6Q1.5 8.5 4.5 9.5" fill="none"/><path d="M14 4L9 8H14Z" stroke="none"/><path d="M1 12.5H2M3 12.5H4M5 12.5H14" fill="none"/></g><g fill="#808080" stroke="#808080"><path d="M9.5 5.5Q9 2.5 5.5 2.5Q1.5 2.5 1.5 6Q1.5 8.5 4.5 9.5" fill="none"/><path d="M14 4L9 8H14Z" stroke="none"/><path d="M1 12.5H2M3 12.5H4M5 12.5H14" fill="none"/></g></svg>
<svg style="left:311px;top:49px" width="12" height="7" viewBox="0 0 12 7" shape-rendering="crispEdges"><g transform="translate(1,1)" fill="#fff" stroke="#fff"><path d="M0 0H12L6 6Z" stroke="none"/></g><g fill="#808080" stroke="#808080"><path d="M0 0H12L6 6Z" stroke="none"/></g></svg>
<div class="vl" style="left:334px;top:42px;height:22px;background:#808080"></div>
<div class="vl" style="left:335px;top:42px;height:22px;background:#fff"></div>
<svg style="left:341px;top:45px" width="16" height="16" viewBox="0 0 16 16" shape-rendering="auto"><g transform="translate(1,1)" fill="#fff" stroke="#fff"><path d="M6.5 0V3L8.5 6M10.5 0V3L8.5 6M8.5 6L6.5 9M8.5 6L10.5 9" fill="none"/><circle cx="6" cy="11" r="2" fill="none"/><circle cx="11" cy="11" r="2" fill="none"/></g><g fill="#808080" stroke="#808080"><path d="M6.5 0V3L8.5 6M10.5 0V3L8.5 6M8.5 6L6.5 9M8.5 6L10.5 9" fill="none"/><circle cx="6" cy="11" r="2" fill="none"/><circle cx="11" cy="11" r="2" fill="none"/></g></svg>
<svg style="left:364px;top:45px" width="16" height="16" viewBox="0 0 16 16" shape-rendering="crispEdges"><g transform="translate(1,1)" fill="#fff" stroke="#fff"><path d="M1.5 1.5H6.5L8.5 3.5V10.5H1.5Z" fill="none"/><path d="M7.5 4.5H12.5L15.5 7.5V13.5H7.5Z" fill="#d4d0c8"/><path d="M3 4H6M3 6H7M3 8H7M9 8H12M9 10H14M9 12H14" fill="none"/></g><g fill="#808080" stroke="#808080"><path d="M1.5 1.5H6.5L8.5 3.5V10.5H1.5Z" fill="none"/><path d="M7.5 4.5H12.5L15.5 7.5V13.5H7.5Z" fill="#d4d0c8"/><path d="M3 4H6M3 6H7M3 8H7M9 8H12M9 10H14M9 12H14" fill="none"/></g></svg>
<svg style="left:387px;top:45px" width="16" height="16" viewBox="0 0 16 16" shape-rendering="crispEdges"><rect x="0.5" y="1.5" width="13" height="10" rx="1" fill="#909048" stroke="#000"/><path d="M3 4.5L5 1.5H8.5L10.5 4.5Z" fill="#f0f0a0" stroke="#000" stroke-width="1"/>
<rect x="3" y="6" width="13" height="9" fill="#000"/><g fill="#fff"><rect x="4" y="7" width="1" height="1"/><rect x="6" y="7" width="1" height="1"/><rect x="8" y="7" width="1" height="1"/><rect x="10" y="7" width="1" height="1"/><rect x="12" y="7" width="1" height="1"/><rect x="14" y="7" width="1" height="1"/><rect x="4" y="13" width="1" height="1"/><rect x="6" y="13" width="1" height="1"/><rect x="8" y="13" width="1" height="1"/><rect x="10" y="13" width="1" height="1"/><rect x="12" y="13" width="1" height="1"/><rect x="14" y="13" width="1" height="1"/></g>
<g fill="#f0b0b0"><rect x="5" y="9" width="2" height="3"/><rect x="8" y="9" width="1" height="3"/><rect x="11" y="9" width="2" height="3"/><rect x="14" y="9" width="1" height="3"/></g><g fill="#c02020"><rect x="6" y="10" width="1" height="1"/><rect x="12" y="10" width="1" height="1"/></g></svg>
<svg style="left:410px;top:45px" width="16" height="16" viewBox="0 0 16 16" shape-rendering="crispEdges"><rect x="1" y="0.5" width="14" height="13" rx="3" fill="#808080"/><rect x="15" y="3" width="1" height="11" fill="#fff"/><path d="M1.5 4.5H8.5L10.5 6.5V14.5H1.5Z" fill="#fff" stroke="#808080"/><path d="M3 8.5H9M3 10.5H9M3 12.5H9" stroke="#808080"/><rect x="9" y="5" width="1" height="1" fill="#fff"/><rect x="1" y="15" width="11" height="1" fill="#fff"/></svg>
<svg style="left:433px;top:45px" width="16" height="16" viewBox="0 0 16 16" shape-rendering="crispEdges"><rect x="1" y="0.5" width="13" height="12" rx="3" fill="#808080"/><path d="M5.5 4.5H12.5L14.5 6.5V14.5H5.5Z" fill="#fff" stroke="#808080"/><path d="M7 8.5H13M7 10.5H13M7 12.5H13" stroke="#808080"/><rect x="13" y="5" width="1" height="1" fill="#fff"/><rect x="15" y="5" width="1" height="11" fill="#fff"/><rect x="5" y="15" width="11" height="1" fill="#fff"/></svg>
<svg style="left:456px;top:45px" width="16" height="16" viewBox="0 0 16 16" shape-rendering="crispEdges"><rect x="1" y="0.5" width="13" height="12" rx="3" fill="#808080"/><path d="M5.5 4.5H12.5L14.5 6.5V14.5H5.5Z" fill="#fff" stroke="#808080"/><path d="M7.5 7.5H10.5V9.5H12.5V12.5H7.5Z" fill="none" stroke="#808080"/><rect x="13" y="5" width="1" height="1" fill="#fff"/><rect x="15" y="5" width="1" height="11" fill="#fff"/><rect x="5" y="15" width="11" height="1" fill="#fff"/></svg>
<div class="vl" style="left:480px;top:42px;height:22px;background:#808080"></div>
<div class="vl" style="left:481px;top:42px;height:22px;background:#fff"></div>
<svg style="left:487px;top:45px" width="16" height="16" viewBox="0 0 16 16" shape-rendering="crispEdges"><path d="M8.5 0.5H12L14.5 3V7.5H8.5Z" fill="#fff" stroke="#000"/><path d="M5.5 3.5H9L11.5 6V10.5H5.5Z" fill="#fff" stroke="#000"/><path d="M2.5 6.5H6L8.5 9V13.5H2.5Z" fill="#fff" stroke="#000"/></svg>
<svg style="left:510px;top:45px" width="16" height="16" viewBox="0 0 16 16" shape-rendering="crispEdges"><g transform="translate(1,1)" fill="#fff" stroke="#fff"><rect x="1" y="1" width="14" height="3" stroke="none"/><rect x="1" y="12" width="14" height="3" stroke="none"/><path d="M3.5 4L12.5 12M12.5 4L3.5 12" fill="none" stroke-width="1.8"/></g><g fill="#808080" stroke="#808080"><rect x="1" y="1" width="14" height="3" stroke="none"/><rect x="1" y="12" width="14" height="3" stroke="none"/><path d="M3.5 4L12.5 12M12.5 4L3.5 12" fill="none" stroke-width="1.8"/></g><g fill="#fff"><rect x="4" y="2" width="1" height="1"/><rect x="6" y="2" width="1" height="1"/><rect x="8" y="2" width="1" height="1"/><rect x="10" y="2" width="1" height="1"/><rect x="4" y="13" width="1" height="1"/><rect x="6" y="13" width="1" height="1"/><rect x="8" y="13" width="1" height="1"/><rect x="10" y="13" width="1" height="1"/></g></svg>
<svg style="left:533px;top:45px" width="16" height="16" viewBox="0 0 16 16" shape-rendering="crispEdges"><g transform="translate(1,1)" fill="#fff" stroke="#fff"><path d="M0.5 2.5H4.5L6.5 4.5V12.5H0.5Z" fill="none"/><path d="M7.5 1.5H11.5L13.5 3.5V11.5H7.5Z" fill="none"/><path d="M4.5 6.5H8.5L10.5 8.5V14.5H4.5Z" fill="#d4d0c8"/><path d="M10.5 5.5H14.5L15.5 6.5V13.5H10.5Z" fill="#d4d0c8"/></g><g fill="#808080" stroke="#808080"><path d="M0.5 2.5H4.5L6.5 4.5V12.5H0.5Z" fill="none"/><path d="M7.5 1.5H11.5L13.5 3.5V11.5H7.5Z" fill="none"/><path d="M4.5 6.5H8.5L10.5 8.5V14.5H4.5Z" fill="#d4d0c8"/><path d="M10.5 5.5H14.5L15.5 6.5V13.5H10.5Z" fill="#d4d0c8"/></g></svg>
<svg style="left:556px;top:45px" width="16" height="16" viewBox="0 0 16 16" shape-rendering="auto"><g transform="translate(1,1)" fill="#fff" stroke="#fff"><path d="M3 1Q7.5 8 3 15M6 1Q10.5 8 6 15M9 1Q13.5 8 9 15" fill="none"/></g><g fill="#808080" stroke="#808080"><path d="M3 1Q7.5 8 3 15M6 1Q10.5 8 6 15M9 1Q13.5 8 9 15" fill="none"/></g></svg>
<div class="vl" style="left:579px;top:42px;height:22px;background:#808080"></div>
<div class="vl" style="left:580px;top:42px;height:22px;background:#fff"></div>
<div class="pressed" style="left:584px;top:42px;width:23px;height:21px;background:#f6f5f3"></div>
<div class="pressed" style="left:607px;top:42px;width:23px;height:21px;background:#f6f5f3"></div>
<div class="pressed" style="left:630px;top:42px;width:23px;height:21px;background:#f6f5f3"></div>
<div class="pressed" style="left:653px;top:42px;width:23px;height:21px;background:#f6f5f3"></div>
<svg style="left:588px;top:45px" width="16" height="16" viewBox="0 0 16 16" shape-rendering="crispEdges"><path d="M3.5 15.5L7.5 11.5H12.5L14.5 9.5M6.5 5.5L8.5 3.5H11.5" fill="none" stroke="#000"/><path d="M0.5 13.5L4.5 9.5V5.5L7.5 2.5M12.5 8.5L14.5 6.5" fill="none" stroke="#808080"/></svg>
<svg style="left:611px;top:45px" width="16" height="16" viewBox="0 0 16 16" shape-rendering="crispEdges"><rect x="0.5" y="3.5" width="15" height="10" fill="#fff" stroke="#000"/><rect x="0" y="3" width="16" height="2" fill="#0000c0"/><rect x="2.5" y="7.5" width="7" height="4" fill="#fff" stroke="#000"/><g fill="#000"><rect x="4" y="9" width="1" height="1"/><rect x="6" y="9" width="1" height="1"/></g><path d="M12.5 7V12" stroke="#000"/><path d="M11 8H14M11 11H14" stroke="#000"/></svg>
<svg style="left:634px;top:45px" width="16" height="16" viewBox="0 0 16 16" shape-rendering="crispEdges"><rect x="1" y="2" width="2" height="1" fill="#c00000"/><rect x="1" y="3" width="2" height="1" fill="#c00000"/><rect x="1" y="4" width="2" height="1" fill="#c00000"/><rect x="1" y="5" width="2" height="1" fill="#c00000"/><rect x="1" y="6" width="2" height="1" fill="#c00000"/><rect x="1" y="7" width="2" height="1" fill="#c00000"/><rect x="1" y="8" width="2" height="1" fill="#c00000"/><rect x="1" y="9" width="2" height="1" fill="#c00000"/><rect x="1" y="10" width="2" height="1" fill="#c00000"/><rect x="1" y="11" width="2" height="1" fill="#c00000"/><rect x="1" y="12" width="2" height="1" fill="#c00000"/><rect x="1" y="13" width="2" height="1" fill="#c00000"/><rect x="1" y="14" width="2" height="1" fill="#c00000"/><rect x="3" y="2" width="2" height="1" fill="#e00000"/><rect x="2" y="3" width="2" height="1" fill="#e00000"/><rect x="3" y="4" width="2" height="1" fill="#e00000"/><rect x="2" y="5" width="2" height="1" fill="#e00000"/><rect x="3" y="6" width="2" height="1" fill="#e00000"/><rect x="2" y="7" width="2" height="1" fill="#e00000"/><rect x="3" y="8" width="2" height="1" fill="#e00000"/><rect x="2" y="9" width="2" height="1" fill="#e00000"/><rect x="3" y="10" width="2" height="1" fill="#e00000"/><rect x="2" y="11" width="2" height="1" fill="#e00000"/><rect x="3" y="12" width="2" height="1" fill="#e00000"/><rect x="2" y="13" width="2" height="1" fill="#e00000"/><rect x="3" y="14" width="2" height="1" fill="#e00000"/><rect x="5" y="2" width="2" height="1" fill="#0000c0"/><rect x="4" y="3" width="2" height="1" fill="#0000c0"/><rect x="5" y="4" width="2" height="1" fill="#0000c0"/><rect x="4" y="5" width="2" height="1" fill="#0000c0"/><rect x="5" y="6" width="2" height="1" fill="#0000c0"/><rect x="4" y="7" width="2" height="1" fill="#0000c0"/><rect x="5" y="8" width="2" height="1" fill="#0000c0"/><rect x="4" y="9" width="2" height="1" fill="#0000c0"/><rect x="5" y="10" width="2" height="1" fill="#0000c0"/><rect x="4" y="11" width="2" height="1" fill="#0000c0"/><rect x="5" y="12" width="2" height="1" fill="#0000c0"/><rect x="4" y="13" width="2" height="1" fill="#0000c0"/><rect x="5" y="14" width="2" height="1" fill="#0000c0"/><rect x="7" y="2" width="2" height="1" fill="#00a0ff"/><rect x="6" y="3" width="2" height="1" fill="#00a0ff"/><rect x="7" y="4" width="2" height="1" fill="#00a0ff"/><rect x="6" y="5" width="2" height="1" fill="#00a0ff"/><rect x="7" y="6" width="2" height="1" fill="#00a0ff"/><rect x="6" y="7" width="2" height="1" fill="#00a0ff"/><rect x="7" y="8" width="2" height="1" fill="#00a0ff"/><rect x="6" y="9" width="2" height="1" fill="#00a0ff"/><rect x="7" y="10" width="2" height="1" fill="#00a0ff"/><rect x="6" y="11" width="2" height="1" fill="#00a0ff"/><rect x="7" y="12" width="2" height="1" fill="#00a0ff"/><rect x="6" y="13" width="2" height="1" fill="#00a0ff"/><rect x="7" y="14" width="2" height="1" fill="#00a0ff"/><rect x="9" y="2" width="2" height="1" fill="#00c000"/><rect x="8" y="3" width="2" height="1" fill="#00c000"/><rect x="9" y="4" width="2" height="1" fill="#00c000"/><rect x="8" y="5" width="2" height="1" fill="#00c000"/><rect x="9" y="6" width="2" height="1" fill="#00c000"/><rect x="8" y="7" width="2" height="1" fill="#00c000"/><rect x="9" y="8" width="2" height="1" fill="#00c000"/><rect x="8" y="9" width="2" height="1" fill="#00c000"/><rect x="9" y="10" width="2" height="1" fill="#00c000"/><rect x="8" y="11" width="2" height="1" fill="#00c000"/><rect x="9" y="12" width="2" height="1" fill="#00c000"/><rect x="8" y="13" width="2" height="1" fill="#00c000"/><rect x="9" y="14" width="2" height="1" fill="#00c000"/><rect x="11" y="2" width="2" height="1" fill="#80e000"/><rect x="10" y="3" width="2" height="1" fill="#80e000"/><rect x="11" y="4" width="2" height="1" fill="#80e000"/><rect x="10" y="5" width="2" height="1" fill="#80e000"/><rect x="11" y="6" width="2" height="1" fill="#80e000"/><rect x="10" y="7" width="2" height="1" fill="#80e000"/><rect x="11" y="8" width="2" height="1" fill="#80e000"/><rect x="10" y="9" width="2" height="1" fill="#80e000"/><rect x="11" y="10" width="2" height="1" fill="#80e000"/><rect x="10" y="11" width="2" height="1" fill="#80e000"/><rect x="11" y="12" width="2" height="1" fill="#80e000"/><rect x="10" y="13" width="2" height="1" fill="#80e000"/><rect x="11" y="14" width="2" height="1" fill="#80e000"/><rect x="13" y="2" width="2" height="1" fill="#f0f000"/><rect x="12" y="3" width="2" height="1" fill="#f0f000"/><rect x="13" y="4" width="2" height="1" fill="#f0f000"/><rect x="12" y="5" width="2" height="1" fill="#f0f000"/><rect x="13" y="6" width="2" height="1" fill="#f0f000"/><rect x="12" y="7" width="2" height="1" fill="#f0f000"/><rect x="13" y="8" width="2" height="1" fill="#f0f000"/><rect x="12" y="9" width="2" height="1" fill="#f0f000"/><rect x="13" y="10" width="2" height="1" fill="#f0f000"/><rect x="12" y="11" width="2" height="1" fill="#f0f000"/><rect x="13" y="12" width="2" height="1" fill="#f0f000"/><rect x="12" y="13" width="2" height="1" fill="#f0f000"/><rect x="13" y="14" width="2" height="1" fill="#f0f000"/></svg>
<svg style="left:657px;top:45px" width="16" height="16" viewBox="0 0 16 16" shape-rendering="crispEdges"><rect x="0" y="1" width="16" height="14" fill="#000"/><g fill="#fff"><rect x="1" y="2" width="1" height="1"/><rect x="3" y="2" width="1" height="1"/><rect x="5" y="2" width="1" height="1"/><rect x="7" y="2" width="1" height="1"/><rect x="9" y="2" width="1" height="1"/><rect x="11" y="2" width="1" height="1"/><rect x="13" y="2" width="1" height="1"/><rect x="1" y="13" width="1" height="1"/><rect x="3" y="13" width="1" height="1"/><rect x="5" y="13" width="1" height="1"/><rect x="7" y="13" width="1" height="1"/><rect x="9" y="13" width="1" height="1"/><rect x="11" y="13" width="1" height="1"/><rect x="13" y="13" width="1" height="1"/></g>
<rect x="1" y="4" width="4" height="8" fill="#f0a0a0"/><rect x="6" y="4" width="4" height="8" fill="#f0a0a0"/><rect x="11" y="4" width="4" height="8" fill="#f0a0a0"/><g fill="#c00000"><path d="M2 6L4 8L2 10Z"/><path d="M7 6L9 8L7 10Z"/><path d="M12 6L14 8L12 10Z"/></g></svg>
<div class="vl" style="left:680px;top:42px;height:22px;background:#808080"></div>
<div class="vl" style="left:681px;top:42px;height:22px;background:#fff"></div>
<svg style="left:688px;top:45px" width="16" height="16" viewBox="0 0 16 16" shape-rendering="crispEdges"><path d="M0 0V11L2.5 8.5L5 13L7 12L4.5 7.5H8Z" fill="#000"/></svg>
<svg style="left:694px;top:46px" width="10" height="12" viewBox="0 0 10 12" shape-rendering="auto"><path d="M0 3.5Q0 0 4.5 0Q9 0 9 3Q9 5 6.5 6L6 8H3.5L3.5 5.5Q6 4.5 6 3Q6 1.2 4.5 1.2Q3 1.2 3 3.8Z" fill="#000080"/><rect x="3.5" y="9" width="2.5" height="2" fill="#000080"/></svg>
<svg style="left:14px;top:73px" width="16" height="16" viewBox="0 0 16 16" shape-rendering="crispEdges"><path d="M6 2V13L0.5 7.5Z" fill="#000"/><path d="M12 2V13L6.5 7.5Z" fill="#000"/></svg>
<svg style="left:37px;top:73px" width="16" height="16" viewBox="0 0 16 16" shape-rendering="crispEdges"><path d="M10 2V13L4 7.5Z" fill="#000"/></svg>
<svg style="left:60px;top:73px" width="16" height="16" viewBox="0 0 16 16" shape-rendering="crispEdges"><path d="M10.5 2.5V12.5L4.5 7.5Z" fill="none" stroke="#000"/></svg>
<svg style="left:83px;top:73px" width="16" height="16" viewBox="0 0 16 16" shape-rendering="crispEdges"><rect x="2" y="3" width="3" height="10" fill="#000"/><rect x="8" y="3" width="3" height="10" fill="#000"/></svg>
<svg style="left:106px;top:73px" width="16" height="16" viewBox="0 0 16 16" shape-rendering="crispEdges"><path d="M3.5 2.5V12.5L9.5 7.5Z" fill="none" stroke="#000"/></svg>
<div class="pressed" style="left:125px;top:70px;width:23px;height:22px;background:#fafafa"></div>
<svg style="left:129px;top:73px" width="16" height="16" viewBox="0 0 16 16" shape-rendering="crispEdges"><path d="M5 3V13L10.5 8Z" fill="#000"/></svg>
<svg style="left:152px;top:73px" width="16" height="16" viewBox="0 0 16 16" shape-rendering="crispEdges"><path d="M0 2V13L5.5 7.5Z" fill="#000"/><path d="M6 2V13L11.5 7.5Z" fill="#000"/></svg>
<div class="vl" style="left:175px;top:70px;height:22px;background:#808080"></div>
<div class="vl" style="left:176px;top:70px;height:22px;background:#fff"></div>
<svg style="left:183px;top:73px" width="16" height="16" viewBox="0 0 16 16" shape-rendering="crispEdges"><g transform="translate(1,1)" fill="#fff" stroke="#fff"><path d="M7 2V13L1 7.5Z" stroke="none"/><rect x="8" y="2" width="3" height="11" stroke="none"/></g><g fill="#808080" stroke="#808080"><path d="M7 2V13L1 7.5Z" stroke="none"/><rect x="8" y="2" width="3" height="11" stroke="none"/></g></svg>
<svg style="left:206px;top:73px" width="16" height="16" viewBox="0 0 16 16" shape-rendering="crispEdges"><g transform="translate(1,1)" fill="#fff" stroke="#fff"><rect x="2" y="2" width="3" height="11" stroke="none"/><path d="M6 2V13L12 7.5Z" stroke="none"/></g><g fill="#808080" stroke="#808080"><rect x="2" y="2" width="3" height="11" stroke="none"/><path d="M6 2V13L12 7.5Z" stroke="none"/></g></svg>
<div class="vl" style="left:229px;top:70px;height:22px;background:#808080"></div>
<div class="vl" style="left:230px;top:70px;height:22px;background:#fff"></div>
<div class="pressed" style="left:233px;top:70px;width:23px;height:22px;background:#e6e4e0"></div>
<svg style="left:237px;top:73px" width="16" height="16" viewBox="0 0 16 16" shape-rendering="auto"><g transform="translate(1,1)" fill="#fff" stroke="#fff"><path d="M6.5 3L3 6.5V12.5H7M6 9.5V12" fill="none" stroke-width="2.2"/><path d="M9 4H13V9L9.5 12.5" fill="none" stroke-width="2.2"/><path d="M9.5 3.5V6.5" fill="none" stroke-width="2"/></g><g fill="#808080" stroke="#808080"><path d="M6.5 3L3 6.5V12.5H7M6 9.5V12" fill="none" stroke-width="2.2"/><path d="M9 4H13V9L9.5 12.5" fill="none" stroke-width="2.2"/><path d="M9.5 3.5V6.5" fill="none" stroke-width="2"/></g></svg>
<svg style="left:293px;top:73px" width="17" height="17" viewBox="0 0 17 17" shape-rendering="auto"><g transform="translate(1,1)" fill="#fff" stroke="#fff"><path d="M0.5 0.5H3.5L14.5 7.5L11 8.5L15.5 13L12 15L8 10.5L7.5 14H5.5L0.5 4Z" fill="none"/></g><g fill="#808080" stroke="#808080"><path d="M0.5 0.5H3.5L14.5 7.5L11 8.5L15.5 13L12 15L8 10.5L7.5 14H5.5L0.5 4Z" fill="none"/></g></svg>
<svg style="left:316px;top:73px" width="16" height="16" viewBox="0 0 16 16" shape-rendering="crispEdges"><g transform="translate(1,1)" fill="#fff" stroke="#fff"><circle cx="6" cy="6" r="4.5" fill="none"/><path d="M9 9L14 14" fill="none" stroke-width="2"/><path d="M4 7Q6 9 8 6" fill="none"/></g><g fill="#808080" stroke="#808080"><circle cx="6" cy="6" r="4.5" fill="none"/><path d="M9 9L14 14" fill="none" stroke-width="2"/><path d="M4 7Q6 9 8 6" fill="none"/></g></svg>
<svg style="left:339px;top:73px" width="16" height="16" viewBox="0 0 16 16" shape-rendering="crispEdges"><g transform="translate(1,1)" fill="#fff" stroke="#fff"><path d="M8 1V15M1 8H15" fill="none"/></g><g fill="#808080" stroke="#808080"><path d="M8 1V15M1 8H15" fill="none"/></g></svg>
<svg style="left:362px;top:73px" width="16" height="16" viewBox="0 0 16 16" shape-rendering="crispEdges"><g transform="translate(1,1)" fill="#fff" stroke="#fff"><path d="M3 0V12H15M0 3H12V15" fill="none" stroke-width="2"/><path d="M15 0L5 10" fill="none"/></g><g fill="#808080" stroke="#808080"><path d="M3 0V12H15M0 3H12V15" fill="none" stroke-width="2"/><path d="M15 0L5 10" fill="none"/></g></svg>
<svg style="left:385px;top:73px" width="16" height="16" viewBox="0 0 16 16" shape-rendering="auto"><g transform="translate(1,1)" fill="#fff" stroke="#fff"><path d="M7.5 1V14M1 7.5H14" fill="none"/><path d="M7.5 0L10 3H5Z M7.5 15L10 12H5Z M0 7.5L3 5V10Z M15 7.5L12 5V10Z" stroke="none"/></g><g fill="#808080" stroke="#808080"><path d="M7.5 1V14M1 7.5H14" fill="none"/><path d="M7.5 0L10 3H5Z M7.5 15L10 12H5Z M0 7.5L3 5V10Z M15 7.5L12 5V10Z" stroke="none"/></g></svg>
<svg style="left:408px;top:73px" width="16" height="16" viewBox="0 0 16 16" shape-rendering="auto"><path d="M1 15L2 12L11 3L12 1H14L16 3L15 5L14 5L5 14Z" fill="#fff" transform="translate(1,1)"/><path d="M0 14L1 11L10 2L11 0H13L15 2L14 4L13 4L4 13Z" fill="#808080"/><path d="M5.5 9.5L8.5 6.5" stroke="#fff" stroke-width="1.2"/><path d="M0 14.5H7" stroke="#808080"/></svg>
<svg style="left:431px;top:73px" width="16" height="16" viewBox="0 0 16 16" shape-rendering="auto"><path d="M16 1L15 6L12 9L10 12L8 14H0L4 10L8 8L10 6Z" fill="#fff" transform="translate(1,1)"/><path d="M16 1L15 6L12 9L10 12L8 14H0L4 10L8 8L10 6Z" fill="#808080"/><rect x="11" y="6.5" width="1" height="1" fill="#fff"/></svg>
<svg style="left:454px;top:73px" width="16" height="16" viewBox="0 0 16 16" shape-rendering="auto"><path d="M11 1H16L9 8L6 13H2L0 11L1 9Z" fill="#fff" transform="translate(1,1)"/><path d="M11 1H16L9 8L6 13H2L0 11L1 9Z" fill="#808080"/><path d="M1.5 9.5L4 7.5L7 10.5L5.5 12.5H2.5L1 11Z" fill="#d4d0c8" stroke="#808080" stroke-width="0.8"/><rect x="5" y="6" width="1" height="1" fill="#fff"/></svg>
<svg style="left:477px;top:73px" width="17" height="16" viewBox="0 0 17 16" shape-rendering="auto"><path d="M9 0L16.5 7.5L9 14L2.5 7Z" fill="#fff" transform="translate(1,1)"/><path d="M9 0L16.5 7.5L9 14L2.5 7Z" fill="#808080"/><path d="M7 5.5L10.5 9" stroke="#fff" stroke-width="1.5" stroke-dasharray="1 0.6"/><path d="M1.5 9V13M0 11.5L1.5 14L3 11.5" fill="none" stroke="#808080" stroke-width="1"/></svg>
<svg style="left:500px;top:73px" width="17" height="16" viewBox="0 0 17 16" shape-rendering="auto"><g transform="translate(1,1)" fill="#fff"><path d="M7 0H9L14 13H16V14H10V13H11.5L10.3 10H5.5L4.5 13H6V14H0V13H1.8Z M6 8.5H9.8L7.8 3Z"/></g><path d="M7 0H9L14 13H16V14H10V13H11.5L10.3 10H5.5L4.5 13H6V14H0V13H1.8Z M6 8.5H9.8L7.8 3Z" fill="#808080" fill-rule="evenodd"/></svg>
<svg style="left:523px;top:73px" width="16" height="16" viewBox="0 0 16 16" shape-rendering="crispEdges"><g transform="translate(1,1)" fill="#fff" stroke="#fff"><path d="M2 14L14 2" fill="none"/></g><g fill="#808080" stroke="#808080"><path d="M2 14L14 2" fill="none"/></g></svg>
<svg style="left:546px;top:73px" width="16" height="16" viewBox="0 0 16 16" shape-rendering="crispEdges"><g transform="translate(1,1)" fill="#fff" stroke="#fff"><rect x="1.5" y="1.5" width="12" height="12" fill="none" stroke-width="2"/></g><g fill="#808080" stroke="#808080"><rect x="1.5" y="1.5" width="12" height="12" fill="none" stroke-width="2"/></g></svg>
<div class="t" style="left:67px;top:100px;color:#808080;letter-spacing:-0.3px"><u>Z</u>oom:</div>
<div class="a" style="left:101px;top:97px;width:46px;height:21px;background:#d4d0c8;box-shadow:inset 1px 1px #808080,inset -1px -1px #fff,inset 2px 2px #404040,inset -2px -2px #d4d0c8"></div>
<div class="t" style="left:105px;top:101px;color:#808080;letter-spacing:-0.6px">1:1</div>
<div class="btn" style="left:130px;top:99px;width:15px;height:17px;box-shadow:inset -1px -1px #404040,inset 1px 1px #d4d0c8,inset -2px -2px #808080,inset 2px 2px #fff"></div>
<svg style="left:134px;top:105px" width="8" height="5" viewBox="0 0 8 5" shape-rendering="crispEdges"><g transform="translate(1,1)" fill="#fff" stroke="#fff"><path d="M0 0H7L3.5 4Z" stroke="none"/></g><g fill="#808080" stroke="#808080"><path d="M0 0H7L3.5 4Z" stroke="none"/></g></svg>
<!-- MDI client -->
<div class="a" style="left:0;top:122px;width:745px;height:432px;background:#808080;box-shadow:inset 1px 1px #808080,inset -1px -1px #fff,inset 2px 2px #404040,inset -2px -2px #d4d0c8"></div>

<!-- child -->
<div class="a" style="left:560px;top:193px;width:117px;height:115px;background:#d4d0c8;box-shadow:inset -1px -1px #404040,inset 1px 1px #d4d0c8,inset -2px -2px #808080,inset 2px 2px #fff"></div>
<div class="a" style="left:563px;top:196px;width:111px;height:18px;background:linear-gradient(to right,#a8a8a8,#cccccc)"></div>
<div class="cbtn" style="left:621px;top:199px"></div>
<div class="cbtn" style="left:637px;top:199px"></div>
<div class="cbtn" style="left:655px;top:199px"></div>
<svg style="left:625px;top:208px" width="6" height="2" shape-rendering="crispEdges"><rect width="6" height="2" fill="#000"/></svg>
<svg style="left:640px;top:201px" width="9" height="9" shape-rendering="crispEdges" fill="#000"><rect x="0" y="0" width="9" height="2"/><rect x="0" y="2" width="1" height="7"/><rect x="8" y="2" width="1" height="7"/><rect x="0" y="8" width="9" height="1"/></svg>
<svg style="left:659px;top:202px" width="8" height="7" shape-rendering="crispEdges" fill="#000"><rect x="0" y="0" width="2" height="1"/><rect x="6" y="0" width="2" height="1"/><rect x="1" y="1" width="2" height="1"/><rect x="5" y="1" width="2" height="1"/><rect x="2" y="2" width="4" height="1"/><rect x="3" y="3" width="2" height="1"/><rect x="2" y="4" width="4" height="1"/><rect x="1" y="5" width="2" height="1"/><rect x="5" y="5" width="2" height="1"/><rect x="0" y="6" width="2" height="1"/><rect x="6" y="6" width="2" height="1"/></svg>
<div class="a" style="left:563px;top:216px;width:110px;height:89px;background:#d4d0c8;box-shadow:inset 1px 1px #808080,inset -1px -1px #fff"></div>
<div class="a" style="left:590px;top:236px;width:81px;height:46px;background:#0000ff"></div>
<svg style="left:598px;top:244px" width="65" height="30" shape-rendering="crispEdges"><rect width="65" height="30" fill="#fff"/><rect x="0" y="16" width="5" height="14" fill="#c0c0c0"/><rect x="37" y="0" width="16" height="16" fill="#c0c0c0"/><rect x="21" y="16" width="16" height="14" fill="#c0c0c0"/><rect x="53" y="16" width="12" height="14" fill="#c0c0c0"/><rect x="5" y="0" width="16" height="16" fill="#c0c0c0"/><g fill="#fff"><rect x="42" y="5" width="2" height="2"/><rect x="40" y="9" width="1" height="2"/><rect x="46" y="8" width="2" height="3"/><rect x="59" y="18" width="1" height="2"/><rect x="57" y="24" width="2" height="3"/><rect x="11" y="5" width="2" height="1"/><rect x="9" y="6" width="1" height="2"/><rect x="11" y="10" width="2" height="3"/><rect x="3" y="20" width="2" height="2"/></g></svg>
<div class="t" style="left:634px;top:286px;font-size:13px;letter-spacing:-0.9px">D:11</div>
<!-- palette -->
<div class="vl" style="left:744px;top:122px;height:431px;background:#fff"></div>
<div class="hl" style="left:745px;top:122px;width:55px;background:#808080"></div>
<div class="hl" style="left:745px;top:123px;width:55px;background:#fff"></div>
<div class="a" style="left:748px;top:128px;width:48px;height:99px;border:1px solid #808080;box-shadow:1px 1px #fff, inset 1px 1px #fff"></div>
<div class="a" style="left:750px;top:130px;width:45px;height:96px;background:linear-gradient(to bottom,#f00 0%,#ff0 16.67%,#0f0 33.33%,#0ff 50%,#00f 66.67%,#f0f 83.33%,#f00 100%)"></div>
<div class="a" style="left:750px;top:130px;width:45px;height:96px;background:linear-gradient(to right,#000 0%,rgba(0,0,0,0) 50%,rgba(255,255,255,0) 50%,#fff 100%)"></div>
<div class="a" style="left:748px;top:231px;width:48px;height:38px;border:1px solid #808080;box-shadow:1px 1px #fff, inset 1px 1px #fff"></div>
<div class="a" style="left:765px;top:245px;width:29px;height:22px;background:#000"></div>
<div class="a" style="left:752px;top:235px;width:29px;height:22px;background:#000"></div>
<svg style="left:752px;top:258px" width="13" height="10" viewBox="0 0 13 10" shape-rendering="crispEdges"><path d="M2.5 1V6.5H10.5" fill="none" stroke="#000" stroke-width="1.2"/><path d="M0 3L2.5 0L5 3Z M9 4L12 6.5L9 9Z" fill="#000"/></svg>
<div class="a" style="left:748px;top:274px;width:48px;height:81px;border:1px solid #808080;box-shadow:1px 1px #fff, inset 1px 1px #fff"></div>
<div class="t" style="left:756px;top:278px;font-family:'Liberation Serif',serif;font-size:10.5px;font-weight:bold;-webkit-text-stroke:0;line-height:11px;color:#101010">R</div>
<div class="t" style="left:767px;top:278px;font-size:10px;line-height:11px">--</div>
<div class="t" style="left:756px;top:289px;font-family:'Liberation Serif',serif;font-size:10.5px;font-weight:bold;-webkit-text-stroke:0;line-height:11px;color:#101010">G</div>
<div class="t" style="left:767px;top:289px;font-size:10px;line-height:11px">--</div>
<div class="t" style="left:756px;top:299px;font-family:'Liberation Serif',serif;font-size:10.5px;font-weight:bold;-webkit-text-stroke:0;line-height:11px;color:#101010">B</div>
<div class="t" style="left:767px;top:299px;font-size:10px;line-height:11px">--</div>
<div class="t" style="left:756px;top:311px;font-family:'Liberation Serif',serif;font-size:10.5px;font-weight:bold;-webkit-text-stroke:0;line-height:11px;color:#101010">O</div>
<div class="t" style="left:767px;top:311px;font-size:10px;line-height:11px">0</div>
<div class="a" style="left:754px;top:323px;width:36px;height:27px;background:#808080;border:1px solid #fff;box-shadow:inset 1px 1px #404040,inset -1px -1px #404040"></div>
<svg style="left:754px;top:323px" width="36" height="27" viewBox="0 0 36 27" shape-rendering="crispEdges" shape-rendering="auto"><path d="M2 2L34 25M34 2L2 25" stroke="#000" fill="none"/></svg>
<div class="hl" style="left:745px;top:552px;width:55px;background:#808080"></div>
<div class="hl" style="left:745px;top:553px;width:55px;background:#fff"></div>
<!-- Status bar -->
<div class="a" style="left:0;top:556px;width:107px;height:15px;box-shadow:inset 1px 1px #808080,inset -1px -1px #fff"></div>
<div class="t" style="left:1px;top:558px;letter-spacing:-0.2px">Press ESC to Abort</div>
<div class="a" style="left:109px;top:556px;width:104px;height:15px;box-shadow:inset 1px 1px #808080,inset -1px -1px #fff"></div>
<div class="t" style="left:110px;top:558px;letter-spacing:-0.15px">Saving 0000C0.gif</div>
<div class="a" style="left:215px;top:556px;width:584px;height:15px;box-shadow:inset 1px 1px #808080,inset -1px -1px #fff"></div>

<!-- Taskbar -->
<div class="hl" style="left:0px;top:573px;width:800px;background:#fff"></div>
<div class="btn" style="left:2px;top:576px;width:52px;height:22px"></div>
<svg style="left:4px;top:578px" width="16" height="16" viewBox="0 0 16 16"><path d="M2.5 2Q5.5 0.5 9 2L8 6.5Q5 5 1.5 6.5Z" fill="#f07828"/><path d="M9.5 2.6Q12 4 14.8 3L13.8 8Q11 9 8.5 7.2Z" fill="#70c020"/><path d="M1.3 6.8Q4.5 5.3 7.9 6.8L7 12.5Q4 11 0.2 12.5Z" fill="#4868e0"/><path d="M8.4 7.8Q11 9.4 13.7 8.4L12.8 13.6Q10 14.6 7.2 13Z" fill="#f8c818"/></svg>
<div class="t" style="left:21px;top:581px;font-weight:bold;font-size:11.5px;letter-spacing:0.4px;-webkit-text-stroke:0.35px #000">Start</div>
<div class="vl" style="left:61px;top:578px;height:18px;background:#fff"></div>
<div class="vl" style="left:63px;top:578px;height:18px;background:#808080"></div>
<svg style="left:70px;top:579px" width="16" height="16" viewBox="0 0 16 16"><rect x="0.5" y="0.5" width="14" height="14" rx="3" fill="#3078d8" stroke="#1a3a90"/><rect x="2" y="2" width="11" height="11" rx="2" fill="#a8e0ff"/><path d="M4 4H11V6H6.5V9H11V11H4Z" fill="#fff" stroke="#2060b0" stroke-width="0.8"/><circle cx="14.5" cy="4.5" r="1.2" fill="#d03020"/><rect x="6" y="7" width="2" height="1" fill="#000"/></svg>
<svg style="left:93px;top:579px" width="16" height="16" viewBox="0 0 16 16"><defs><radialGradient id="ieg1" cx="0.35" cy="0.35" r="0.8"><stop offset="0" stop-color="#70c8ff"/><stop offset="1" stop-color="#1060c8"/></radialGradient></defs><ellipse cx="8" cy="8" rx="8" ry="3.2" fill="none" stroke="#4aa0e8" stroke-width="1.2" transform="rotate(-35 8 8)"/><circle cx="8.5" cy="8.5" r="6.5" fill="url(#ieg1)"/><rect x="6" y="6" width="5" height="2" fill="#fff"/><path d="M5.5 10.5H10Q11 10.5 12 9.5L15 10.5Q13 14 9 14Q7 14 5.5 12.5Z" fill="#fff" opacity="0.9"/><path d="M4.5 10.5H10.5" stroke="#1060c8" stroke-width="0"/></svg>
<svg style="left:116px;top:579px" width="16" height="16" viewBox="0 0 16 16"><path d="M1 7L6 2H13L15 5V13L10 15H3Z" fill="#2050c0"/><rect x="8" y="4" width="6" height="9" fill="#fff"/><path d="M2 6H8L6 10H2Z" fill="#fff"/><path d="M3 11L9 5" stroke="#60a8f0" stroke-width="2"/><rect x="11" y="5" width="2" height="2" fill="#203040"/></svg>
<svg style="left:139px;top:579px" width="16" height="16" viewBox="0 0 16 16"><path d="M0.5 2.5H6L7.5 4H15.5V14.5H0.5Z" fill="#d8a030" stroke="#906010"/><path d="M0.5 6.5H16L15 14.5H0.5Z" fill="#f8d878"/><circle cx="7" cy="9" r="3.3" fill="#d8f4ff" stroke="#607080" stroke-width="1"/><path d="M9.5 11.5L12 14" stroke="#806040" stroke-width="1.6"/></svg>
<svg style="left:162px;top:578px" width="17" height="17" viewBox="0 0 17 17"><path d="M2 1.5H13L15.5 4V12L13 15H3L0.5 12V4Z" fill="#e89020" stroke="#803000"/><path d="M3 3H12L14 5V11L12 13H4L2 11V5Z" fill="#f8b040"/><circle cx="9" cy="5" r="1.2" fill="#20a020"/><circle cx="12" cy="7" r="1.2" fill="#d02020"/><ellipse cx="6" cy="11" rx="2.5" ry="1.5" fill="#fff"/><path d="M0.5 0.5L11 10" stroke="#402080" stroke-width="1.8"/><path d="M13.5 12.5Q15.5 12 15 14L14 15V17" fill="none" stroke="#000" stroke-width="1"/></svg>
<svg style="left:186px;top:579px" width="16" height="16" shape-rendering="crispEdges"><rect x="0" y="0" width="2" height="1" fill="#000"/><rect x="3" y="0" width="2" height="1" fill="#000"/><rect x="6" y="0" width="2" height="1" fill="#000"/><rect x="2" y="1" width="1" height="1" fill="#c0a868"/><rect x="9" y="1" width="1" height="1" fill="#000"/><rect x="0" y="2" width="2" height="1" fill="#000"/><rect x="2" y="2" width="1" height="1" fill="#c0a868"/><rect x="3" y="2" width="5" height="1" fill="#000"/><rect x="8" y="2" width="2" height="1" fill="#c0a868"/><rect x="0" y="3" width="2" height="1" fill="#000"/><rect x="2" y="3" width="1" height="1" fill="#c0a868"/><rect x="3" y="3" width="4" height="1" fill="#000"/><rect x="7" y="3" width="1" height="1" fill="#c0a868"/><rect x="8" y="3" width="2" height="1" fill="#000"/><rect x="0" y="4" width="2" height="1" fill="#000"/><rect x="2" y="4" width="1" height="1" fill="#c0a868"/><rect x="3" y="4" width="3" height="1" fill="#000"/><rect x="6" y="4" width="1" height="1" fill="#c0a868"/><rect x="7" y="4" width="3" height="1" fill="#000"/><rect x="0" y="5" width="2" height="1" fill="#000"/><rect x="2" y="5" width="1" height="1" fill="#c0a868"/><rect x="3" y="5" width="2" height="1" fill="#000"/><rect x="5" y="5" width="1" height="1" fill="#c0a868"/><rect x="6" y="5" width="4" height="1" fill="#000"/><rect x="0" y="6" width="2" height="1" fill="#000"/><rect x="2" y="6" width="1" height="1" fill="#c0a868"/><rect x="3" y="6" width="1" height="1" fill="#000"/><rect x="4" y="6" width="1" height="1" fill="#c0a868"/><rect x="5" y="6" width="5" height="1" fill="#000"/><rect x="0" y="7" width="2" height="1" fill="#000"/><rect x="2" y="7" width="1" height="1" fill="#c0a868"/><rect x="3" y="7" width="7" height="1" fill="#000"/><rect x="11" y="7" width="2" height="1" fill="#000"/><rect x="14" y="7" width="2" height="1" fill="#000"/><rect x="2" y="8" width="1" height="1" fill="#c0a868"/><rect x="6" y="8" width="4" height="1" fill="#000"/><rect x="10" y="8" width="1" height="1" fill="#c0a868"/><rect x="11" y="8" width="5" height="1" fill="#fff"/><rect x="0" y="9" width="2" height="1" fill="#000"/><rect x="3" y="9" width="2" height="1" fill="#000"/><rect x="6" y="9" width="4" height="1" fill="#000"/><rect x="10" y="9" width="1" height="1" fill="#c0a868"/><rect x="11" y="9" width="1" height="1" fill="#000"/><rect x="12" y="9" width="2" height="1" fill="#fff"/><rect x="14" y="9" width="1" height="1" fill="#000"/><rect x="15" y="9" width="1" height="1" fill="#fff"/><rect x="6" y="10" width="4" height="1" fill="#000"/><rect x="10" y="10" width="1" height="1" fill="#c0a868"/><rect x="11" y="10" width="1" height="1" fill="#fff"/><rect x="12" y="10" width="2" height="1" fill="#000"/><rect x="14" y="10" width="2" height="1" fill="#fff"/><rect x="6" y="11" width="4" height="1" fill="#000"/><rect x="10" y="11" width="1" height="1" fill="#c0a868"/><rect x="11" y="11" width="1" height="1" fill="#fff"/><rect x="12" y="11" width="1" height="1" fill="#000"/><rect x="13" y="11" width="1" height="1" fill="#fff"/><rect x="14" y="11" width="1" height="1" fill="#000"/><rect x="15" y="11" width="1" height="1" fill="#fff"/><rect x="6" y="12" width="4" height="1" fill="#000"/><rect x="10" y="12" width="1" height="1" fill="#c0a868"/><rect x="11" y="12" width="1" height="1" fill="#fff"/><rect x="12" y="12" width="2" height="1" fill="#000"/><rect x="14" y="12" width="2" height="1" fill="#fff"/><rect x="5" y="13" width="5" height="1" fill="#000"/><rect x="10" y="13" width="1" height="1" fill="#c0a868"/><rect x="11" y="13" width="1" height="1" fill="#000"/><rect x="12" y="13" width="2" height="1" fill="#fff"/><rect x="14" y="13" width="1" height="1" fill="#000"/><rect x="15" y="13" width="1" height="1" fill="#fff"/><rect x="6" y="14" width="1" height="1" fill="#000"/><rect x="10" y="14" width="1" height="1" fill="#c0a868"/><rect x="11" y="14" width="5" height="1" fill="#fff"/><rect x="8" y="15" width="2" height="1" fill="#000"/><rect x="11" y="15" width="2" height="1" fill="#000"/><rect x="14" y="15" width="2" height="1" fill="#000"/></svg>
<svg style="left:209px;top:579px" width="17" height="17" viewBox="0 0 17 17"><path d="M0.5 9Q0 6 2 5Q2 1 6 0.5Q11 0 13 3Q14.5 5 13.5 7L11 9Q8 11 5 11Q2 11.5 0.5 9Z" fill="#c00010"/><path d="M2 8H5M3.5 6.5V9.5" stroke="#fff" stroke-width="1"/><text x="11.6" y="16" font-family="Liberation Sans" font-weight="bold" font-size="11.5" fill="#fff" stroke="#000" stroke-width="2" paint-order="stroke" text-anchor="middle">8</text></svg>
<svg style="left:245px;top:581px" width="9" height="5" viewBox="0 0 9 5"><path d="M0 0H2L4.5 2.5L2 5H0L2.5 2.5Z M4 0H6L8.5 2.5L6 5H4L6.5 2.5Z" fill="#000"/></svg>
<div class="vl" style="left:259px;top:578px;height:18px;background:#fff"></div>
<div class="vl" style="left:260px;top:578px;height:18px;background:#fff"></div>
<div class="vl" style="left:261px;top:578px;height:18px;background:#808080"></div>
<div class="btn" style="left:266px;top:576px;width:83px;height:22px"></div>
<svg style="left:271px;top:578px" width="16" height="16" viewBox="0 0 16 16"><defs><radialGradient id="ieg2" cx="0.35" cy="0.35" r="0.8"><stop offset="0" stop-color="#70c8ff"/><stop offset="1" stop-color="#1060c8"/></radialGradient></defs><ellipse cx="8" cy="8" rx="8" ry="3.2" fill="none" stroke="#4aa0e8" stroke-width="1.2" transform="rotate(-35 8 8)"/><circle cx="8.5" cy="8.5" r="6.5" fill="url(#ieg2)"/><rect x="6" y="6" width="5" height="2" fill="#fff"/><path d="M5.5 10.5H10Q11 10.5 12 9.5L15 10.5Q13 14 9 14Q7 14 5.5 12.5Z" fill="#fff" opacity="0.9"/><path d="M4.5 10.5H10.5" stroke="#1060c8" stroke-width="0"/></svg>
<div class="t" style="left:289px;top:581px;letter-spacing:0.75px;">2 Inter...</div>
<svg style="left:341px;top:585px" width="5" height="3" viewBox="0 0 5 3" shape-rendering="crispEdges"><path d="M0 0H5L2.5 3Z" fill="#000"/></svg>
<div class="btn" style="left:352px;top:576px;width:83px;height:22px"></div>
<svg style="left:357px;top:579px" width="16" height="16" viewBox="0 0 16 16"><path d="M2 1L12 0L15 14L4 15Z" fill="#60a8e8" stroke="#3070c0"/><path d="M3 2L11 1.5L13 12" fill="none" stroke="#c0e0ff"/></svg>
<div class="t" style="left:375px;top:581px;letter-spacing:0.35px;">Untitled ...</div>
<div class="btn" style="left:438px;top:576px;width:83px;height:22px"></div>
<svg style="left:441px;top:578px" width="17" height="17" viewBox="0 0 17 17"><path d="M2 1.5H13L15.5 4V12L13 15H3L0.5 12V4Z" fill="#e89020" stroke="#803000"/><path d="M3 3H12L14 5V11L12 13H4L2 11V5Z" fill="#f8b040"/><circle cx="9" cy="5" r="1.2" fill="#20a020"/><circle cx="12" cy="7" r="1.2" fill="#d02020"/><ellipse cx="6" cy="11" rx="2.5" ry="1.5" fill="#fff"/><path d="M0.5 0.5L11 10" stroke="#402080" stroke-width="1.8"/><path d="M13.5 12.5Q15.5 12 15 14L14 15V17" fill="none" stroke="#000" stroke-width="1"/></svg>
<div class="t" style="left:461px;top:581px;letter-spacing:0.0px;">Jasc Pai...</div>
<div class="btn" style="left:524px;top:576px;width:83px;height:22px"></div>
<svg style="left:528px;top:578px" width="17" height="17" viewBox="0 0 17 17"><path d="M0.5 9Q0 6 2 5Q2 1 6 0.5Q11 0 13 3Q14.5 5 13.5 7L11 9Q8 11 5 11Q2 11.5 0.5 9Z" fill="#c00010"/><path d="M2 8H5M3.5 6.5V9.5" stroke="#fff" stroke-width="1"/><text x="11.6" y="16" font-family="Liberation Sans" font-weight="bold" font-size="11.5" fill="#fff" stroke="#000" stroke-width="2" paint-order="stroke" text-anchor="middle">8</text></svg>
<div class="t" style="left:547px;top:581px;letter-spacing:0.0px;">Jasc Pai...</div>
<div class="a" style="left:610px;top:576px;width:83px;height:22px;background-color:#fff;background-image:repeating-conic-gradient(#d4d0c8 0 25%,#fff 0 50%);background-size:2px 2px;box-shadow:inset 1px 1px #404040,inset -1px -1px #fff,inset 2px 2px #808080"></div>
<svg style="left:615px;top:580px" width="16" height="16" shape-rendering="crispEdges"><rect x="0" y="0" width="2" height="1" fill="#000"/><rect x="3" y="0" width="2" height="1" fill="#000"/><rect x="6" y="0" width="2" height="1" fill="#000"/><rect x="2" y="1" width="1" height="1" fill="#c0a868"/><rect x="9" y="1" width="1" height="1" fill="#000"/><rect x="0" y="2" width="2" height="1" fill="#000"/><rect x="2" y="2" width="1" height="1" fill="#c0a868"/><rect x="3" y="2" width="5" height="1" fill="#000"/><rect x="8" y="2" width="2" height="1" fill="#c0a868"/><rect x="0" y="3" width="2" height="1" fill="#000"/><rect x="2" y="3" width="1" height="1" fill="#c0a868"/><rect x="3" y="3" width="4" height="1" fill="#000"/><rect x="7" y="3" width="1" height="1" fill="#c0a868"/><rect x="8" y="3" width="2" height="1" fill="#000"/><rect x="0" y="4" width="2" height="1" fill="#000"/><rect x="2" y="4" width="1" height="1" fill="#c0a868"/><rect x="3" y="4" width="3" height="1" fill="#000"/><rect x="6" y="4" width="1" height="1" fill="#c0a868"/><rect x="7" y="4" width="3" height="1" fill="#000"/><rect x="0" y="5" width="2" height="1" fill="#000"/><rect x="2" y="5" width="1" height="1" fill="#c0a868"/><rect x="3" y="5" width="2" height="1" fill="#000"/><rect x="5" y="5" width="1" height="1" fill="#c0a868"/><rect x="6" y="5" width="4" height="1" fill="#000"/><rect x="0" y="6" width="2" height="1" fill="#000"/><rect x="2" y="6" width="1" height="1" fill="#c0a868"/><rect x="3" y="6" width="1" height="1" fill="#000"/><rect x="4" y="6" width="1" height="1" fill="#c0a868"/><rect x="5" y="6" width="5" height="1" fill="#000"/><rect x="0" y="7" width="2" height="1" fill="#000"/><rect x="2" y="7" width="1" height="1" fill="#c0a868"/><rect x="3" y="7" width="7" height="1" fill="#000"/><rect x="11" y="7" width="2" height="1" fill="#000"/><rect x="14" y="7" width="2" height="1" fill="#000"/><rect x="2" y="8" width="1" height="1" fill="#c0a868"/><rect x="6" y="8" width="4" height="1" fill="#000"/><rect x="10" y="8" width="1" height="1" fill="#c0a868"/><rect x="11" y="8" width="5" height="1" fill="#fff"/><rect x="0" y="9" width="2" height="1" fill="#000"/><rect x="3" y="9" width="2" height="1" fill="#000"/><rect x="6" y="9" width="4" height="1" fill="#000"/><rect x="10" y="9" width="1" height="1" fill="#c0a868"/><rect x="11" y="9" width="1" height="1" fill="#000"/><rect x="12" y="9" width="2" height="1" fill="#fff"/><rect x="14" y="9" width="1" height="1" fill="#000"/><rect x="15" y="9" width="1" height="1" fill="#fff"/><rect x="6" y="10" width="4" height="1" fill="#000"/><rect x="10" y="10" width="1" height="1" fill="#c0a868"/><rect x="11" y="10" width="1" height="1" fill="#fff"/><rect x="12" y="10" width="2" height="1" fill="#000"/><rect x="14" y="10" width="2" height="1" fill="#fff"/><rect x="6" y="11" width="4" height="1" fill="#000"/><rect x="10" y="11" width="1" height="1" fill="#c0a868"/><rect x="11" y="11" width="1" height="1" fill="#fff"/><rect x="12" y="11" width="1" height="1" fill="#000"/><rect x="13" y="11" width="1" height="1" fill="#fff"/><rect x="14" y="11" width="1" height="1" fill="#000"/><rect x="15" y="11" width="1" height="1" fill="#fff"/><rect x="6" y="12" width="4" height="1" fill="#000"/><rect x="10" y="12" width="1" height="1" fill="#c0a868"/><rect x="11" y="12" width="1" height="1" fill="#fff"/><rect x="12" y="12" width="2" height="1" fill="#000"/><rect x="14" y="12" width="2" height="1" fill="#fff"/><rect x="5" y="13" width="5" height="1" fill="#000"/><rect x="10" y="13" width="1" height="1" fill="#c0a868"/><rect x="11" y="13" width="1" height="1" fill="#000"/><rect x="12" y="13" width="2" height="1" fill="#fff"/><rect x="14" y="13" width="1" height="1" fill="#000"/><rect x="15" y="13" width="1" height="1" fill="#fff"/><rect x="6" y="14" width="1" height="1" fill="#000"/><rect x="10" y="14" width="1" height="1" fill="#c0a868"/><rect x="11" y="14" width="5" height="1" fill="#fff"/><rect x="8" y="15" width="2" height="1" fill="#000"/><rect x="11" y="15" width="2" height="1" fill="#000"/><rect x="14" y="15" width="2" height="1" fill="#000"/></svg>
<div class="t" style="left:634px;top:581px;font-weight:bold;letter-spacing:0.3px;">Jasc Ani...</div>
<div class="a" style="left:703px;top:576px;width:95px;height:22px;box-shadow:inset 1px 1px #808080,inset -1px -1px #fff"></div>
<svg style="left:708px;top:585px" width="9" height="5" viewBox="0 0 9 5"><path d="M4.5 0H2.5L0 2.5L2.5 5H4.5L2 2.5Z M8.5 0H6.5L4 2.5L6.5 5H8.5L6 2.5Z" fill="#000"/></svg>
<svg style="left:719px;top:577px" width="18" height="18" viewBox="0 0 18 18"><ellipse cx="6.6" cy="5.4" rx="5" ry="3.8" fill="#c82808" transform="rotate(25 6.6 5.4)"/><ellipse cx="5.5" cy="4.5" rx="2" ry="1.3" fill="#f06040"/><ellipse cx="12.5" cy="13.3" rx="5.5" ry="4" fill="#2a70d0" transform="rotate(20 12.5 13.3)"/><ellipse cx="12" cy="13" rx="4" ry="2.6" fill="#60b0f8"/><ellipse cx="10" cy="12.5" rx="1.5" ry="1.2" fill="#d0f0ff"/></svg>
<div class="t" style="left:747px;top:581px">9:17 AM</div>
<!-- Dialog -->
<div class="a" style="left:171px;top:127px;width:459px;height:319px;background:#d4d0c8;box-shadow:inset -1px -1px #404040,inset 1px 1px #d4d0c8,inset -2px -2px #808080,inset 2px 2px #fff"></div>
<div class="a" style="left:174px;top:130px;width:453px;height:18px;background:linear-gradient(to right,#0a246a,#a6caf0)"></div>
<div class="t" style="left:175px;top:133px;color:#fff;font-weight:bold;letter-spacing:0.55px">Optimization Preview</div>
<div class="cbtn" style="left:609px;top:132px"></div>
<svg style="left:613px;top:135px" width="8" height="7" shape-rendering="crispEdges" fill="#000"><rect x="0" y="0" width="2" height="1"/><rect x="6" y="0" width="2" height="1"/><rect x="1" y="1" width="2" height="1"/><rect x="5" y="1" width="2" height="1"/><rect x="2" y="2" width="4" height="1"/><rect x="3" y="3" width="2" height="1"/><rect x="2" y="4" width="4" height="1"/><rect x="1" y="5" width="2" height="1"/><rect x="5" y="5" width="2" height="1"/><rect x="0" y="6" width="2" height="1"/><rect x="6" y="6" width="2" height="1"/></svg>


<!-- group boxes -->
<div class="a" style="left:196px;top:177px;width:197px;height:195px;border:1px solid #808080;box-shadow:1px 1px #fff, inset 1px 1px #fff"></div>
<div class="a" style="left:203px;top:172px;width:39px;height:10px;background:#d4d0c8"></div>
<div class="t" style="left:204px;top:171px;letter-spacing:0.1px">Original</div>
<div class="a" style="left:410px;top:177px;width:197px;height:195px;border:1px solid #808080;box-shadow:1px 1px #fff, inset 1px 1px #fff"></div>
<div class="a" style="left:417px;top:172px;width:49px;height:10px;background:#d4d0c8"></div>
<div class="t" style="left:419px;top:171px;letter-spacing:-0.3px">Optimized</div>
<!-- frames -->
<div class="a" style="left:209px;top:191px;width:170px;height:169px;border-style:solid;border-width:1px;border-color:#808080 #fff #fff #808080"><div style="position:absolute;left:0;top:0;right:0;bottom:0;border:1px solid #404040"></div></div>
<div class="a" style="left:422px;top:191px;width:170px;height:169px;border-style:solid;border-width:1px;border-color:#808080 #fff #fff #808080"><div style="position:absolute;left:0;top:0;right:0;bottom:0;border:1px solid #404040"></div></div>
<!-- images -->
<svg style="left:264px;top:260px" width="60" height="30" shape-rendering="crispEdges"><rect width="60" height="30" fill="#0000c8"/><g fill="#fff"><rect x="0" y="2" width="1" height="1"/><rect x="0" y="28" width="1" height="1"/><rect x="1" y="2" width="1" height="1"/><rect x="1" y="28" width="1" height="1"/><rect x="2" y="2" width="1" height="1"/><rect x="2" y="28" width="1" height="1"/><rect x="3" y="2" width="1" height="1"/><rect x="3" y="21" width="1" height="1"/><rect x="3" y="28" width="1" height="1"/><rect x="4" y="16" width="1" height="1"/><rect x="4" y="28" width="1" height="1"/><rect x="5" y="28" width="1" height="1"/><rect x="7" y="8" width="1" height="1"/><rect x="8" y="3" width="1" height="1"/><rect x="8" y="4" width="1" height="1"/><rect x="8" y="7" width="1" height="1"/><rect x="8" y="8" width="1" height="1"/><rect x="8" y="9" width="1" height="1"/><rect x="8" y="14" width="1" height="1"/><rect x="8" y="15" width="1" height="1"/><rect x="8" y="16" width="1" height="1"/><rect x="8" y="22" width="1" height="1"/><rect x="8" y="23" width="1" height="1"/><rect x="9" y="8" width="1" height="1"/><rect x="9" y="10" width="1" height="1"/><rect x="9" y="11" width="1" height="1"/><rect x="9" y="14" width="1" height="1"/><rect x="9" y="15" width="1" height="1"/><rect x="9" y="16" width="1" height="1"/><rect x="9" y="22" width="1" height="1"/><rect x="10" y="27" width="1" height="1"/><rect x="12" y="3" width="1" height="1"/><rect x="13" y="9" width="1" height="1"/><rect x="13" y="17" width="1" height="1"/><rect x="13" y="27" width="1" height="1"/><rect x="14" y="1" width="1" height="1"/><rect x="14" y="9" width="1" height="1"/><rect x="15" y="0" width="1" height="1"/><rect x="15" y="1" width="1" height="1"/><rect x="15" y="2" width="1" height="1"/><rect x="15" y="23" width="1" height="1"/><rect x="15" y="24" width="1" height="1"/><rect x="16" y="1" width="1" height="1"/><rect x="16" y="13" width="1" height="1"/><rect x="16" y="19" width="1" height="1"/><rect x="16" y="23" width="1" height="1"/><rect x="16" y="24" width="1" height="1"/><rect x="17" y="11" width="1" height="1"/><rect x="17" y="19" width="1" height="1"/><rect x="18" y="10" width="1" height="1"/><rect x="18" y="11" width="1" height="1"/><rect x="18" y="19" width="1" height="1"/><rect x="19" y="11" width="1" height="1"/><rect x="19" y="19" width="1" height="1"/><rect x="20" y="0" width="1" height="1"/><rect x="20" y="19" width="1" height="1"/><rect x="21" y="0" width="1" height="1"/><rect x="21" y="1" width="1" height="1"/><rect x="21" y="18" width="1" height="1"/><rect x="21" y="19" width="1" height="1"/><rect x="21" y="20" width="1" height="1"/><rect x="21" y="21" width="1" height="1"/><rect x="21" y="22" width="1" height="1"/><rect x="21" y="24" width="1" height="1"/><rect x="21" y="25" width="1" height="1"/><rect x="21" y="26" width="1" height="1"/><rect x="22" y="0" width="1" height="1"/><rect x="22" y="1" width="1" height="1"/><rect x="22" y="2" width="1" height="1"/><rect x="22" y="19" width="1" height="1"/><rect x="23" y="0" width="1" height="1"/><rect x="23" y="1" width="1" height="1"/><rect x="23" y="23" width="1" height="1"/><rect x="24" y="0" width="1" height="1"/><rect x="24" y="22" width="1" height="1"/><rect x="24" y="23" width="1" height="1"/><rect x="24" y="24" width="1" height="1"/><rect x="24" y="27" width="1" height="1"/><rect x="24" y="28" width="1" height="1"/><rect x="25" y="23" width="1" height="1"/><rect x="26" y="7" width="1" height="1"/><rect x="27" y="8" width="1" height="1"/><rect x="27" y="16" width="1" height="1"/><rect x="27" y="28" width="1" height="1"/><rect x="28" y="9" width="1" height="1"/><rect x="28" y="15" width="1" height="1"/><rect x="28" y="16" width="1" height="1"/><rect x="28" y="17" width="1" height="1"/><rect x="29" y="16" width="1" height="1"/><rect x="29" y="24" width="1" height="1"/><rect x="30" y="23" width="1" height="1"/><rect x="30" y="24" width="1" height="1"/><rect x="30" y="25" width="1" height="1"/><rect x="31" y="24" width="1" height="1"/><rect x="32" y="6" width="1" height="1"/><rect x="32" y="19" width="1" height="1"/><rect x="32" y="20" width="1" height="1"/><rect x="33" y="19" width="1" height="1"/><rect x="33" y="28" width="1" height="1"/><rect x="36" y="4" width="1" height="1"/><rect x="36" y="5" width="1" height="1"/><rect x="36" y="10" width="1" height="1"/><rect x="38" y="1" width="1" height="1"/><rect x="39" y="4" width="1" height="1"/><rect x="39" y="10" width="1" height="1"/><rect x="40" y="4" width="1" height="1"/><rect x="40" y="9" width="1" height="1"/><rect x="40" y="10" width="1" height="1"/><rect x="40" y="11" width="1" height="1"/><rect x="41" y="1" width="1" height="1"/><rect x="41" y="8" width="1" height="1"/><rect x="41" y="10" width="1" height="1"/><rect x="41" y="11" width="1" height="1"/><rect x="42" y="8" width="1" height="1"/><rect x="43" y="8" width="1" height="1"/><rect x="43" y="16" width="1" height="1"/><rect x="44" y="3" width="1" height="1"/><rect x="44" y="8" width="1" height="1"/><rect x="45" y="4" width="1" height="1"/><rect x="45" y="8" width="1" height="1"/><rect x="45" y="13" width="1" height="1"/><rect x="46" y="5" width="1" height="1"/><rect x="46" y="8" width="1" height="1"/><rect x="46" y="12" width="1" height="1"/><rect x="47" y="6" width="1" height="1"/><rect x="47" y="8" width="1" height="1"/><rect x="47" y="11" width="1" height="1"/><rect x="48" y="7" width="1" height="1"/><rect x="48" y="8" width="1" height="1"/><rect x="48" y="10" width="1" height="1"/><rect x="49" y="7" width="1" height="1"/><rect x="49" y="8" width="1" height="1"/><rect x="49" y="9" width="1" height="1"/><rect x="49" y="28" width="1" height="1"/><rect x="50" y="0" width="1" height="1"/><rect x="50" y="1" width="1" height="1"/><rect x="50" y="2" width="1" height="1"/><rect x="50" y="3" width="1" height="1"/><rect x="50" y="4" width="1" height="1"/><rect x="50" y="5" width="1" height="1"/><rect x="50" y="6" width="1" height="1"/><rect x="50" y="7" width="1" height="1"/><rect x="50" y="8" width="1" height="1"/><rect x="50" y="9" width="1" height="1"/><rect x="50" y="10" width="1" height="1"/><rect x="50" y="11" width="1" height="1"/><rect x="50" y="12" width="1" height="1"/><rect x="50" y="13" width="1" height="1"/><rect x="50" y="14" width="1" height="1"/><rect x="50" y="15" width="1" height="1"/><rect x="50" y="16" width="1" height="1"/><rect x="50" y="23" width="1" height="1"/><rect x="50" y="28" width="1" height="1"/><rect x="51" y="7" width="1" height="1"/><rect x="51" y="8" width="1" height="1"/><rect x="51" y="9" width="1" height="1"/><rect x="51" y="10" width="1" height="1"/><rect x="51" y="28" width="1" height="1"/><rect x="52" y="6" width="1" height="1"/><rect x="52" y="7" width="1" height="1"/><rect x="52" y="8" width="1" height="1"/><rect x="52" y="9" width="1" height="1"/><rect x="52" y="11" width="1" height="1"/><rect x="52" y="28" width="1" height="1"/><rect x="53" y="5" width="1" height="1"/><rect x="53" y="8" width="1" height="1"/><rect x="53" y="12" width="1" height="1"/><rect x="54" y="4" width="1" height="1"/><rect x="54" y="8" width="1" height="1"/><rect x="54" y="13" width="1" height="1"/><rect x="55" y="1" width="1" height="1"/><rect x="55" y="3" width="1" height="1"/><rect x="55" y="8" width="1" height="1"/><rect x="55" y="14" width="1" height="1"/><rect x="56" y="2" width="1" height="1"/><rect x="56" y="8" width="1" height="1"/><rect x="56" y="15" width="1" height="1"/><rect x="56" y="28" width="1" height="1"/><rect x="57" y="1" width="1" height="1"/><rect x="57" y="6" width="1" height="1"/><rect x="57" y="8" width="1" height="1"/><rect x="57" y="19" width="1" height="1"/><rect x="57" y="27" width="1" height="1"/><rect x="57" y="28" width="1" height="1"/><rect x="58" y="0" width="1" height="1"/><rect x="58" y="6" width="1" height="1"/><rect x="58" y="8" width="1" height="1"/><rect x="58" y="22" width="1" height="1"/><rect x="58" y="28" width="1" height="1"/><rect x="59" y="8" width="1" height="1"/><rect x="59" y="21" width="1" height="1"/><rect x="59" y="22" width="1" height="1"/><rect x="59" y="23" width="1" height="1"/></g></svg>
<svg style="left:477px;top:260px" width="60" height="30" shape-rendering="crispEdges"><rect width="60" height="30" fill="#0000c8"/><g fill="#fff"><rect x="0" y="2" width="1" height="1"/><rect x="0" y="28" width="1" height="1"/><rect x="1" y="2" width="1" height="1"/><rect x="1" y="28" width="1" height="1"/><rect x="2" y="2" width="1" height="1"/><rect x="2" y="28" width="1" height="1"/><rect x="3" y="2" width="1" height="1"/><rect x="3" y="21" width="1" height="1"/><rect x="3" y="28" width="1" height="1"/><rect x="4" y="16" width="1" height="1"/><rect x="4" y="28" width="1" height="1"/><rect x="5" y="28" width="1" height="1"/><rect x="7" y="8" width="1" height="1"/><rect x="8" y="3" width="1" height="1"/><rect x="8" y="4" width="1" height="1"/><rect x="8" y="7" width="1" height="1"/><rect x="8" y="8" width="1" height="1"/><rect x="8" y="9" width="1" height="1"/><rect x="8" y="14" width="1" height="1"/><rect x="8" y="15" width="1" height="1"/><rect x="8" y="16" width="1" height="1"/><rect x="8" y="22" width="1" height="1"/><rect x="8" y="23" width="1" height="1"/><rect x="9" y="8" width="1" height="1"/><rect x="9" y="10" width="1" height="1"/><rect x="9" y="11" width="1" height="1"/><rect x="9" y="14" width="1" height="1"/><rect x="9" y="15" width="1" height="1"/><rect x="9" y="16" width="1" height="1"/><rect x="9" y="22" width="1" height="1"/><rect x="10" y="27" width="1" height="1"/><rect x="12" y="3" width="1" height="1"/><rect x="13" y="9" width="1" height="1"/><rect x="13" y="17" width="1" height="1"/><rect x="13" y="27" width="1" height="1"/><rect x="14" y="1" width="1" height="1"/><rect x="14" y="9" width="1" height="1"/><rect x="15" y="0" width="1" height="1"/><rect x="15" y="1" width="1" height="1"/><rect x="15" y="2" width="1" height="1"/><rect x="15" y="23" width="1" height="1"/><rect x="15" y="24" width="1" height="1"/><rect x="16" y="1" width="1" height="1"/><rect x="16" y="13" width="1" height="1"/><rect x="16" y="19" width="1" height="1"/><rect x="16" y="23" width="1" height="1"/><rect x="16" y="24" width="1" height="1"/><rect x="17" y="11" width="1" height="1"/><rect x="17" y="19" width="1" height="1"/><rect x="18" y="10" width="1" height="1"/><rect x="18" y="11" width="1" height="1"/><rect x="18" y="19" width="1" height="1"/><rect x="19" y="11" width="1" height="1"/><rect x="19" y="19" width="1" height="1"/><rect x="20" y="0" width="1" height="1"/><rect x="20" y="19" width="1" height="1"/><rect x="21" y="0" width="1" height="1"/><rect x="21" y="1" width="1" height="1"/><rect x="21" y="18" width="1" height="1"/><rect x="21" y="19" width="1" height="1"/><rect x="21" y="20" width="1" height="1"/><rect x="21" y="21" width="1" height="1"/><rect x="21" y="22" width="1" height="1"/><rect x="21" y="24" width="1" height="1"/><rect x="21" y="25" width="1" height="1"/><rect x="21" y="26" width="1" height="1"/><rect x="22" y="0" width="1" height="1"/><rect x="22" y="1" width="1" height="1"/><rect x="22" y="2" width="1" height="1"/><rect x="22" y="19" width="1" height="1"/><rect x="23" y="0" width="1" height="1"/><rect x="23" y="1" width="1" height="1"/><rect x="23" y="23" width="1" height="1"/><rect x="24" y="0" width="1" height="1"/><rect x="24" y="22" width="1" height="1"/><rect x="24" y="23" width="1" height="1"/><rect x="24" y="24" width="1" height="1"/><rect x="24" y="27" width="1" height="1"/><rect x="24" y="28" width="1" height="1"/><rect x="25" y="23" width="1" height="1"/><rect x="26" y="7" width="1" height="1"/><rect x="27" y="8" width="1" height="1"/><rect x="27" y="16" width="1" height="1"/><rect x="27" y="28" width="1" height="1"/><rect x="28" y="9" width="1" height="1"/><rect x="28" y="15" width="1" height="1"/><rect x="28" y="16" width="1" height="1"/><rect x="28" y="17" width="1" height="1"/><rect x="29" y="16" width="1" height="1"/><rect x="29" y="24" width="1" height="1"/><rect x="30" y="23" width="1" height="1"/><rect x="30" y="24" width="1" height="1"/><rect x="30" y="25" width="1" height="1"/><rect x="31" y="24" width="1" height="1"/><rect x="32" y="6" width="1" height="1"/><rect x="32" y="19" width="1" height="1"/><rect x="32" y="20" width="1" height="1"/><rect x="33" y="19" width="1" height="1"/><rect x="33" y="28" width="1" height="1"/><rect x="36" y="4" width="1" height="1"/><rect x="36" y="5" width="1" height="1"/><rect x="36" y="10" width="1" height="1"/><rect x="38" y="1" width="1" height="1"/><rect x="39" y="4" width="1" height="1"/><rect x="39" y="10" width="1" height="1"/><rect x="40" y="4" width="1" height="1"/><rect x="40" y="9" width="1" height="1"/><rect x="40" y="10" width="1" height="1"/><rect x="40" y="11" width="1" height="1"/><rect x="41" y="1" width="1" height="1"/><rect x="41" y="8" width="1" height="1"/><rect x="41" y="10" width="1" height="1"/><rect x="41" y="11" width="1" height="1"/><rect x="42" y="8" width="1" height="1"/><rect x="43" y="8" width="1" height="1"/><rect x="43" y="16" width="1" height="1"/><rect x="44" y="3" width="1" height="1"/><rect x="44" y="8" width="1" height="1"/><rect x="45" y="4" width="1" height="1"/><rect x="45" y="8" width="1" height="1"/><rect x="45" y="13" width="1" height="1"/><rect x="46" y="5" width="1" height="1"/><rect x="46" y="8" width="1" height="1"/><rect x="46" y="12" width="1" height="1"/><rect x="47" y="6" width="1" height="1"/><rect x="47" y="8" width="1" height="1"/><rect x="47" y="11" width="1" height="1"/><rect x="48" y="7" width="1" height="1"/><rect x="48" y="8" width="1" height="1"/><rect x="48" y="10" width="1" height="1"/><rect x="49" y="7" width="1" height="1"/><rect x="49" y="8" width="1" height="1"/><rect x="49" y="9" width="1" height="1"/><rect x="49" y="28" width="1" height="1"/><rect x="50" y="0" width="1" height="1"/><rect x="50" y="1" width="1" height="1"/><rect x="50" y="2" width="1" height="1"/><rect x="50" y="3" width="1" height="1"/><rect x="50" y="4" width="1" height="1"/><rect x="50" y="5" width="1" height="1"/><rect x="50" y="6" width="1" height="1"/><rect x="50" y="7" width="1" height="1"/><rect x="50" y="8" width="1" height="1"/><rect x="50" y="9" width="1" height="1"/><rect x="50" y="10" width="1" height="1"/><rect x="50" y="11" width="1" height="1"/><rect x="50" y="12" width="1" height="1"/><rect x="50" y="13" width="1" height="1"/><rect x="50" y="14" width="1" height="1"/><rect x="50" y="15" width="1" height="1"/><rect x="50" y="16" width="1" height="1"/><rect x="50" y="23" width="1" height="1"/><rect x="50" y="28" width="1" height="1"/><rect x="51" y="7" width="1" height="1"/><rect x="51" y="8" width="1" height="1"/><rect x="51" y="9" width="1" height="1"/><rect x="51" y="10" width="1" height="1"/><rect x="51" y="28" width="1" height="1"/><rect x="52" y="6" width="1" height="1"/><rect x="52" y="7" width="1" height="1"/><rect x="52" y="8" width="1" height="1"/><rect x="52" y="9" width="1" height="1"/><rect x="52" y="11" width="1" height="1"/><rect x="52" y="28" width="1" height="1"/><rect x="53" y="5" width="1" height="1"/><rect x="53" y="8" width="1" height="1"/><rect x="53" y="12" width="1" height="1"/><rect x="54" y="4" width="1" height="1"/><rect x="54" y="8" width="1" height="1"/><rect x="54" y="13" width="1" height="1"/><rect x="55" y="1" width="1" height="1"/><rect x="55" y="3" width="1" height="1"/><rect x="55" y="8" width="1" height="1"/><rect x="55" y="14" width="1" height="1"/><rect x="56" y="2" width="1" height="1"/><rect x="56" y="8" width="1" height="1"/><rect x="56" y="15" width="1" height="1"/><rect x="56" y="28" width="1" height="1"/><rect x="57" y="1" width="1" height="1"/><rect x="57" y="6" width="1" height="1"/><rect x="57" y="8" width="1" height="1"/><rect x="57" y="19" width="1" height="1"/><rect x="57" y="27" width="1" height="1"/><rect x="57" y="28" width="1" height="1"/><rect x="58" y="0" width="1" height="1"/><rect x="58" y="6" width="1" height="1"/><rect x="58" y="8" width="1" height="1"/><rect x="58" y="22" width="1" height="1"/><rect x="58" y="28" width="1" height="1"/><rect x="59" y="8" width="1" height="1"/><rect x="59" y="21" width="1" height="1"/><rect x="59" y="22" width="1" height="1"/><rect x="59" y="23" width="1" height="1"/></g></svg>
<!-- separator -->
<div class="hl" style="left:185px;top:396px;width:431px;background:#808080"></div>
<div class="hl" style="left:185px;top:397px;width:432px;background:#fff"></div>
<!-- buttons -->
<div class="btn" style="left:296px;top:410px;width:75px;height:23px"></div>
<div class="t" style="left:317px;top:415px">&lt; <u>B</u>ack</div>
<div class="a" style="left:371px;top:410px;width:75px;height:23px;background:#d4d0c8;border:1px solid #000;box-shadow:inset -1px -1px #404040,inset 1px 1px #fff,inset -2px -2px #808080"></div>
<div class="a" style="left:375px;top:414px;width:67px;height:15px;border:1px dotted #000"></div>
<div class="t" style="left:393px;top:415px"><u>N</u>ext &gt;</div>
<div class="btn" style="left:456px;top:410px;width:75px;height:23px"></div>
<div class="t" style="left:477px;top:415px">Cancel</div>
<div class="btn" style="left:542px;top:410px;width:75px;height:23px"></div>
<div class="t" style="left:568px;top:415px">Help</div>

</body></html>
